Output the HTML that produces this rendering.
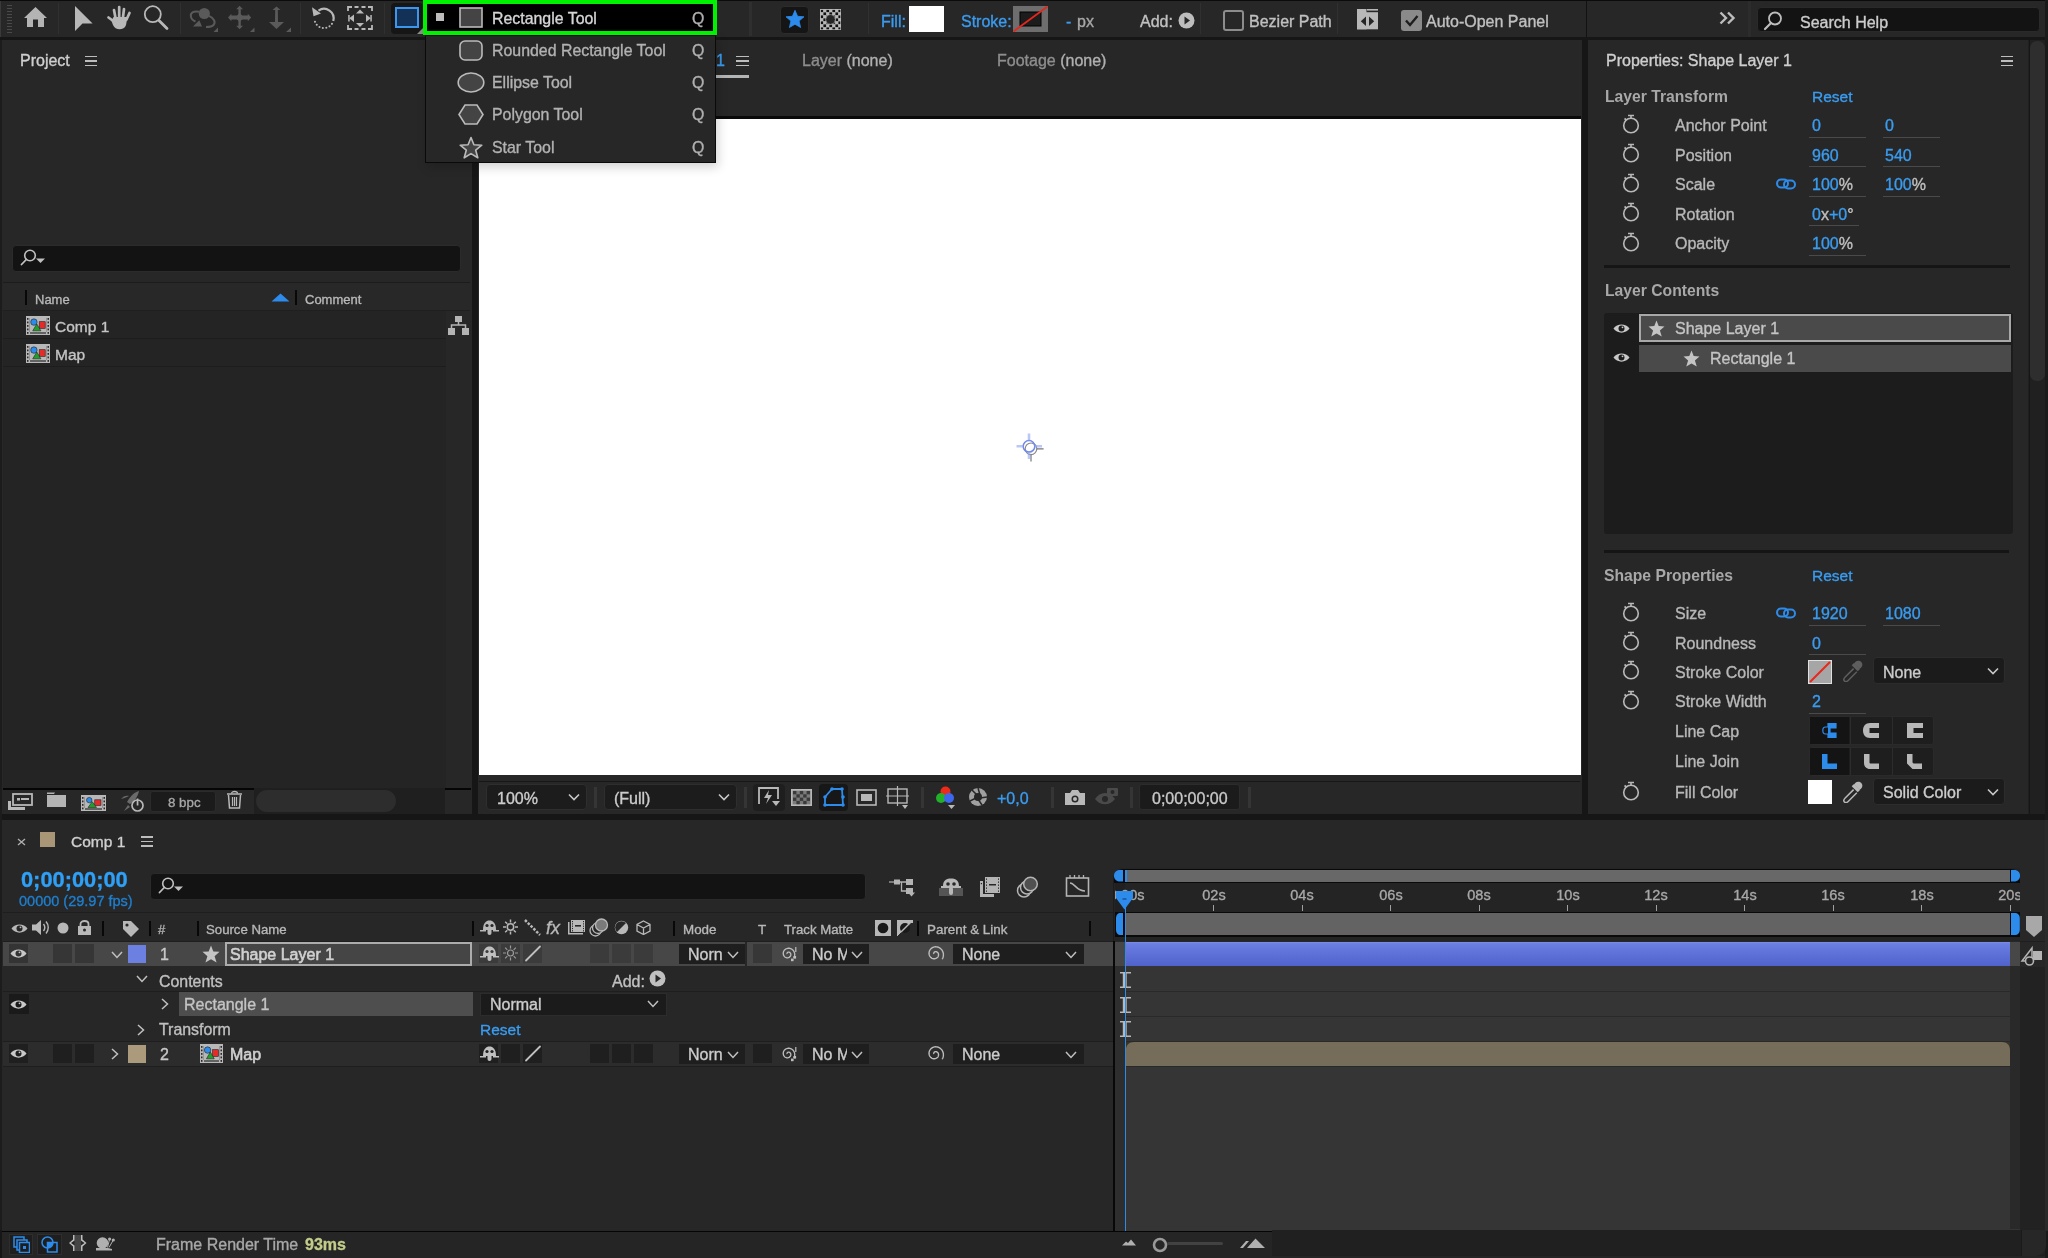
<!DOCTYPE html>
<html><head><meta charset="utf-8"><title>After Effects</title>
<style>
html,body{margin:0;padding:0;}
body{width:2048px;height:1258px;overflow:hidden;position:relative;background:#161616;font-family:"Liberation Sans", sans-serif;}
body>div{position:absolute;}
.t{white-space:nowrap;-webkit-text-stroke:0.35px currentColor;will-change:transform;}
</style></head><body>
<div style="left:0px;top:0px;width:2048px;height:1258px;background:#161616;"></div>
<div style="left:0px;top:0px;width:2048px;height:1px;background:#0b0b0b;"></div>
<div style="left:0px;top:1px;width:2048px;height:36px;background:#272727;"></div>
<div style="left:0px;top:37px;width:2048px;height:3px;background:#161616;"></div>
<div style="left:7px;top:5px;width:5px;height:1px;background:#4a4a4a;"></div>
<div style="left:7px;top:8px;width:5px;height:1px;background:#4a4a4a;"></div>
<div style="left:7px;top:11px;width:5px;height:1px;background:#4a4a4a;"></div>
<div style="left:7px;top:14px;width:5px;height:1px;background:#4a4a4a;"></div>
<div style="left:7px;top:17px;width:5px;height:1px;background:#4a4a4a;"></div>
<div style="left:7px;top:20px;width:5px;height:1px;background:#4a4a4a;"></div>
<div style="left:7px;top:23px;width:5px;height:1px;background:#4a4a4a;"></div>
<div style="left:7px;top:26px;width:5px;height:1px;background:#4a4a4a;"></div>
<div style="left:7px;top:29px;width:5px;height:1px;background:#4a4a4a;"></div>
<div style="left:7px;top:32px;width:5px;height:1px;background:#4a4a4a;"></div>
<div style="left:0px;top:1px;width:1px;height:36px;background:#3a3a3a;"></div>
<svg style="position:absolute;left:23px;top:6px;" width="25" height="23" viewBox="0 0 25 23"><path d="M12.5 1 L24 12 L21 12 L21 21 L15 21 L15 13.5 L10 13.5 L10 21 L4 21 L4 12 L1 12 Z" fill="#b4b4b4"/></svg>
<div style="left:58px;top:3px;width:1px;height:31px;background:#303030;"></div>
<svg style="position:absolute;left:74px;top:5px;" width="20" height="27" viewBox="0 0 20 27"><path d="M1 1 L18.6 18.5 L8.5 18.5 L1 26 Z" fill="#b8b8b8"/></svg>
<svg style="position:absolute;left:104px;top:4px;" width="28" height="28" viewBox="0 0 28 28"><path d="M10 6 L11.5 14 M15.2 3 L15.2 13 M20 5 L19 13 M25.5 9 L22.5 15.5 M4.5 13.5 L10 17.5" stroke="#b8b8b8" stroke-width="2.7" stroke-linecap="round"/><path d="M9.5 13 L23.5 13 L22 21 C21 24 18.5 25.3 15.5 25.3 C12.5 25.3 10.5 24 9 21 L7.5 17 Z" fill="#b8b8b8"/></svg>
<svg style="position:absolute;left:143px;top:5px;" width="27" height="27" viewBox="0 0 27 27"><circle cx="9.8" cy="9.2" r="8" fill="none" stroke="#b8b8b8" stroke-width="1.8"/><path d="M16 15.5 L24 23.5" stroke="#b8b8b8" stroke-width="2.8" stroke-linecap="round"/></svg>
<div style="left:180px;top:3px;width:1px;height:31px;background:#303030;"></div>
<svg style="position:absolute;left:180px;top:0px;" width="45" height="36" viewBox="0 0 45 36"><circle cx="24.3" cy="13.5" r="5.6" fill="#5a5a5a"/><path d="M19 11.8 C14 10.5 10.5 12.5 10.8 16 C11 18.5 13 20.5 15.5 21.5" fill="none" stroke="#5a5a5a" stroke-width="2"/><path d="M13 26.5 L19.3 20.2 L22 26.5 Z" fill="#5a5a5a"/><path d="M29 15.8 C34 18 36 22.5 33.5 25 C32 26.8 29 27 26 27" fill="none" stroke="#5a5a5a" stroke-width="2"/><path d="M33.5 32 L38 32 L38 27.5 Z" fill="#5a5a5a"/></svg>
<svg style="position:absolute;left:224px;top:0px;" width="34" height="36" viewBox="0 0 34 36"><path d="M15.6 5.8 L19 9.2 L16.8 9.2 L16.8 15.5 L23.8 15.5 L23.8 13.8 L27.2 17.5 L23.8 21.2 L23.8 19.5 L16.8 19.5 L16.8 25.8 L19 25.8 L15.6 29.2 L12.2 25.8 L14.4 25.8 L14.4 19.5 L7.4 19.5 L7.4 21.2 L4 17.5 L7.4 13.8 L7.4 15.5 L14.4 15.5 L14.4 9.2 L12.2 9.2 Z" fill="#5a5a5a"/><path d="M15.6 13 L20 17.5 L15.6 22 L11.2 17.5 Z" fill="#5a5a5a"/><path d="M26 32 L30.5 32 L30.5 27.5 Z" fill="#5a5a5a"/></svg>
<svg style="position:absolute;left:262px;top:0px;" width="34" height="36" viewBox="0 0 34 36"><path d="M14.5 6.5 L18.5 10 L15.8 10 L16 22 L22 22 L14.5 29 L7 22 L13 22 L13.2 10 L10.5 10 Z" fill="#5a5a5a"/><path d="M24 32 L29 32 L29 27.5 Z" fill="#5a5a5a"/></svg>
<div style="left:300px;top:3px;width:1px;height:31px;background:#303030;"></div>
<svg style="position:absolute;left:308px;top:3px;" width="32" height="30" viewBox="0 0 32 30"><path d="M10.49 7.64 A9.6 9.6 0 0 1 25.27 17.98" fill="none" stroke="#b8b8b8" stroke-width="2.2"/><path d="M4 4.2 L13 10.5 L5.5 13.2 Z" fill="#b8b8b8"/><circle cx="6.98" cy="18.78" r="1.05" fill="#b8b8b8"/><circle cx="8.75" cy="21.80" r="1.05" fill="#b8b8b8"/><circle cx="11.49" cy="23.98" r="1.05" fill="#b8b8b8"/><circle cx="14.83" cy="25.03" r="1.05" fill="#b8b8b8"/><circle cx="18.32" cy="24.81" r="1.05" fill="#b8b8b8"/><circle cx="21.51" cy="23.36" r="1.05" fill="#b8b8b8"/><circle cx="23.96" cy="20.87" r="1.05" fill="#b8b8b8"/></svg>
<svg style="position:absolute;left:347px;top:6px;" width="26" height="24" viewBox="0 0 26 24"><path d="M1 5 L1 1 L5 1 M21 1 L25 1 L25 5 M25 19 L25 23 L21 23 M5 23 L1 23 L1 19" fill="none" stroke="#b8b8b8" stroke-width="1.8"/><path d="M7.5 1 L11.5 1 M14.5 1 L18.5 1 M7.5 23 L11.5 23 M14.5 23 L18.5 23" stroke="#b8b8b8" stroke-width="1.8"/><path d="M13 3.5 L17 7.5 L9 7.5 Z M13 21 L17 17 L9 17 Z" fill="#b8b8b8"/><path d="M7 8.5 L2.2 12.2 L7 16 Z M19 8.5 L23.8 12.2 L19 16 Z" fill="#b8b8b8"/><rect x="1.2" y="9" width="1.5" height="6.5" fill="#b8b8b8"/><rect x="23.3" y="9" width="1.5" height="6.5" fill="#b8b8b8"/></svg>
<div style="left:384px;top:3px;width:1px;height:31px;background:#303030;"></div>
<div style="left:391px;top:3px;width:32px;height:31px;background:#161616;border-radius:4px;"></div>
<div style="left:395px;top:7px;width:24px;height:21px;background:#133057;border:2px solid #3d96ee;box-sizing:border-box;"></div>
<svg style="position:absolute;left:417px;top:28px;" width="6" height="6" viewBox="0 0 6 6"><path d="M6 0 L6 6 L0 6 Z" fill="#8a8a8a"/></svg>
<div style="left:749px;top:2px;width:2.5px;height:34px;background:#2f2f2f;"></div>
<div style="left:780px;top:5.5px;width:29px;height:28.5px;background:#151515;border:1px solid #2c2c2c;border-radius:4px;box-sizing:border-box;"></div>
<svg style="position:absolute;left:785px;top:8.5px;" width="20" height="19" viewBox="0 0 20 19"><path d="M10 1.3 L12.6 7.3 L19 7.8 L14.1 12 L15.6 18.5 L10 15.2 L4.4 18.5 L5.9 12 L1 7.8 L7.4 7.3 Z" fill="#2d8ceb" stroke="#2d8ceb" stroke-width="0.8" stroke-linejoin="round"/></svg>
<svg style="position:absolute;left:820px;top:8.5px;" width="21" height="21" viewBox="0 0 21 21"><rect x="0" y="0" width="21" height="21" fill="#b8b8b8"/><g clip-path="inset(0)"><rect x="0.40" y="0.40" width="2.70" height="2.70" fill="#111"/><rect x="0.40" y="6.40" width="2.70" height="2.70" fill="#111"/><rect x="0.40" y="12.40" width="2.70" height="2.70" fill="#111"/><rect x="0.40" y="18.40" width="2.70" height="2.70" fill="#111"/><rect x="3.40" y="3.40" width="2.70" height="2.70" fill="#111"/><rect x="3.40" y="9.40" width="2.70" height="2.70" fill="#111"/><rect x="3.40" y="15.40" width="2.70" height="2.70" fill="#111"/><rect x="6.40" y="0.40" width="2.70" height="2.70" fill="#111"/><rect x="6.40" y="6.40" width="2.70" height="2.70" fill="#111"/><rect x="6.40" y="12.40" width="2.70" height="2.70" fill="#111"/><rect x="6.40" y="18.40" width="2.70" height="2.70" fill="#111"/><rect x="9.40" y="3.40" width="2.70" height="2.70" fill="#111"/><rect x="9.40" y="9.40" width="2.70" height="2.70" fill="#111"/><rect x="9.40" y="15.40" width="2.70" height="2.70" fill="#111"/><rect x="12.40" y="0.40" width="2.70" height="2.70" fill="#111"/><rect x="12.40" y="6.40" width="2.70" height="2.70" fill="#111"/><rect x="12.40" y="12.40" width="2.70" height="2.70" fill="#111"/><rect x="12.40" y="18.40" width="2.70" height="2.70" fill="#111"/><rect x="15.40" y="3.40" width="2.70" height="2.70" fill="#111"/><rect x="15.40" y="9.40" width="2.70" height="2.70" fill="#111"/><rect x="15.40" y="15.40" width="2.70" height="2.70" fill="#111"/><rect x="18.40" y="0.40" width="2.70" height="2.70" fill="#111"/><rect x="18.40" y="6.40" width="2.70" height="2.70" fill="#111"/><rect x="18.40" y="12.40" width="2.70" height="2.70" fill="#111"/><rect x="18.40" y="18.40" width="2.70" height="2.70" fill="#111"/></g><circle cx="10.5" cy="10.5" r="5.6" fill="#b8b8b8" opacity="0.55"/><circle cx="10.5" cy="10.5" r="4.4" fill="#262626"/><rect x="0" y="0" width="21" height="21" fill="none" stroke="#b8b8b8" stroke-width="1.4"/></svg>
<div style="left:868px;top:3px;width:1px;height:31px;background:#303030;"></div>
<div class="t" style="left:881px;top:11.56px;font-size:16px;line-height:20px;color:#3a9cf0;font-weight:400;">Fill:</div>
<div style="left:909px;top:6px;width:35px;height:26px;background:#ffffff;"></div>
<div class="t" style="left:961px;top:11.56px;font-size:16px;line-height:20px;color:#3a9cf0;font-weight:400;">Stroke:</div>
<svg style="position:absolute;left:1013px;top:6px;" width="35" height="26" viewBox="0 0 35 26"><rect x="0" y="0" width="35" height="26" fill="#6e6e6e"/><rect x="7" y="6" width="21" height="14" fill="#1c1c1c" stroke="#000" stroke-width="1"/><path d="M0.5 25.5 L34.5 0.5" stroke="#e8261c" stroke-width="1.8"/></svg>
<div class="t" style="left:1066px;top:11.56px;font-size:16px;line-height:20px;color:#3a9cf0;font-weight:400;">-</div>
<div class="t" style="left:1077px;top:11.56px;font-size:16px;line-height:20px;color:#a8a8a8;font-weight:400;">px</div>
<div class="t" style="left:1140px;top:11.56px;font-size:16px;line-height:20px;color:#c0c0c0;font-weight:400;">Add:</div>
<svg style="position:absolute;left:1178px;top:12px;" width="17" height="17" viewBox="0 0 17 17"><circle cx="8.5" cy="8.5" r="8" fill="#bdbdbd"/><path d="M6.5 4.5 L12 8.5 L6.5 12.5 Z" fill="#272727"/></svg>
<div style="left:1200px;top:3px;width:1px;height:31px;background:#303030;"></div>
<div style="left:1223px;top:10px;width:21px;height:21px;background:transparent;border:2px solid #8c8c8c;border-radius:3px;box-sizing:border-box;"></div>
<div class="t" style="left:1249px;top:11.56px;font-size:16px;line-height:20px;color:#c0c0c0;font-weight:400;">Bezier Path</div>
<div style="left:1337px;top:3px;width:1px;height:31px;background:#303030;"></div>
<svg style="position:absolute;left:1356px;top:8px;" width="23" height="22" viewBox="0 0 23 22"><rect x="1" y="1" width="9.5" height="20.3" fill="#b8b8b8"/><rect x="1" y="4.2" width="21" height="17.1" fill="#b8b8b8"/><rect x="11" y="1" width="11" height="1.6" fill="#b8b8b8"/><path d="M4.8 13.3 L10 8.6 L10 18 Z M18.2 13.3 L13 8.6 L13 18 Z" fill="#262626"/></svg>
<div style="left:1401px;top:10px;width:21px;height:21px;background:#8a8a8a;border-radius:3px;"></div>
<svg style="position:absolute;left:1401px;top:10px;" width="21" height="21" viewBox="0 0 21 21"><path d="M5 10.5 L9 15 L16.5 6" fill="none" stroke="#1e1e1e" stroke-width="2.4"/></svg>
<div class="t" style="left:1426px;top:11.56px;font-size:16px;line-height:20px;color:#c0c0c0;font-weight:400;">Auto-Open Panel</div>
<div style="left:1586px;top:1px;width:1px;height:36px;background:#121212;"></div>
<svg style="position:absolute;left:1719px;top:11px;" width="17" height="14" viewBox="0 0 17 14"><path d="M1.5 1.5 L7 7 L1.5 12.5 M9 1.5 L14.5 7 L9 12.5" fill="none" stroke="#bdbdbd" stroke-width="2.4"/></svg>
<div style="left:1748px;top:1px;width:3px;height:36px;background:#2c2c2c;"></div>
<div style="left:1757px;top:7px;width:283px;height:25px;background:#131313;border:1px solid #2a2a2a;border-radius:4px;box-sizing:border-box;"></div>
<svg style="position:absolute;left:1763px;top:11px;" width="20" height="20" viewBox="0 0 20 20"><circle cx="12" cy="7.5" r="6" fill="none" stroke="#bdbdbd" stroke-width="1.8"/><path d="M8 12 L2 18" stroke="#bdbdbd" stroke-width="2.2" stroke-linecap="round"/></svg>
<div class="t" style="left:1800px;top:12.66px;font-size:16px;line-height:20px;color:#cccccc;font-weight:400;">Search Help</div>
<div style="left:2045px;top:0px;width:3px;height:1258px;background:#1a1a1a;"></div>
<div style="left:2px;top:40px;width:470px;height:774px;background:#272727;"></div>
<div style="left:0px;top:40px;width:2px;height:1190px;background:#1c1c1c;"></div>
<div class="t" style="left:20px;top:51.26px;font-size:16px;line-height:20px;color:#cfcfcf;font-weight:400;">Project</div>
<div style="left:85px;top:55.75px;width:12px;height:1.5px;background:#bdbdbd;"></div>
<div style="left:85px;top:60.05px;width:12px;height:1.5px;background:#bdbdbd;"></div>
<div style="left:85px;top:64.55px;width:12px;height:1.5px;background:#bdbdbd;"></div>
<div style="left:12px;top:245px;width:449px;height:27px;background:#131313;border:1px solid #2b2b2b;border-radius:4px;box-sizing:border-box;"></div>
<svg style="position:absolute;left:20px;top:249px;" width="27" height="18" viewBox="0 0 27 18"><circle cx="10" cy="6.5" r="5.3" fill="none" stroke="#c0c0c0" stroke-width="1.6"/><path d="M6.3 10.5 L1.5 15.5" stroke="#c0c0c0" stroke-width="1.8" stroke-linecap="round"/><path d="M16 9.5 L25 9.5 L20.5 14 Z" fill="#c0c0c0"/></svg>
<div style="left:3px;top:282px;width:467px;height:1px;background:#1c1c1c;"></div>
<div style="left:3px;top:283px;width:467px;height:28px;background:#282828;"></div>
<div style="left:3px;top:310px;width:467px;height:1px;background:#1f1f1f;"></div>
<div style="left:25px;top:290px;width:2px;height:15px;background:#080808;"></div>
<div class="t" style="left:34.6px;top:290.50px;font-size:13px;line-height:17px;color:#b8b8b8;font-weight:400;">Name</div>
<svg style="position:absolute;left:271px;top:293px;" width="20" height="9" viewBox="0 0 20 9"><path d="M0.5 8.5 L9.5 0.5 L18.5 8.5 Z" fill="#2d8ceb"/></svg>
<div style="left:295px;top:290px;width:2px;height:15px;background:#080808;"></div>
<div class="t" style="left:304.5px;top:290.50px;font-size:13px;line-height:17px;color:#b8b8b8;font-weight:400;">Comment</div>
<div style="left:3px;top:311px;width:443px;height:477px;background:#242424;"></div>
<div style="left:3px;top:338px;width:443px;height:1px;background:#1d1d1d;"></div>
<div style="left:3px;top:366px;width:443px;height:1px;background:#1d1d1d;"></div>
<svg style="position:absolute;left:26px;top:316px;" width="24" height="19" viewBox="0 0 24 19"><rect x="0" y="0" width="24" height="19" fill="#b8b8b8"/><rect x="3.5" y="2" width="17" height="14" fill="#2a2a2a"/><rect x="1" y="2.0" width="1.5" height="1.8" fill="#2a2a2a"/><rect x="21.5" y="2.0" width="1.5" height="1.8" fill="#2a2a2a"/><rect x="1" y="5.5" width="1.5" height="1.8" fill="#2a2a2a"/><rect x="21.5" y="5.5" width="1.5" height="1.8" fill="#2a2a2a"/><rect x="1" y="9.0" width="1.5" height="1.8" fill="#2a2a2a"/><rect x="21.5" y="9.0" width="1.5" height="1.8" fill="#2a2a2a"/><rect x="1" y="12.5" width="1.5" height="1.8" fill="#2a2a2a"/><rect x="21.5" y="12.5" width="1.5" height="1.8" fill="#2a2a2a"/><rect x="1" y="16.0" width="1.5" height="1.8" fill="#2a2a2a"/><rect x="21.5" y="16.0" width="1.5" height="1.8" fill="#2a2a2a"/><rect x="3.5" y="2" width="17" height="14" fill="#b8b8b8"/><rect x="13.200000000000001" y="5.7" width="6.0" height="6.6499999999999995" fill="#e52a2a" stroke="#222" stroke-width="0.6"/><circle cx="7.92" cy="6.08" r="3.2300000000000004" fill="#2d8ceb" stroke="#222" stroke-width="0.6"/><path d="M6.720000000000001 14.82 L10.8 7.9799999999999995 L14.879999999999999 14.82 Z" fill="#1fa02a" stroke="#222" stroke-width="0.6"/><rect x="4" y="16.4" width="16" height="1.2" fill="#2a2a2a"/></svg>
<div class="t" style="left:55px;top:317.33px;font-size:15.5px;line-height:20px;color:#c4c4c4;font-weight:400;">Comp 1</div>
<svg style="position:absolute;left:26px;top:344px;" width="24" height="19" viewBox="0 0 24 19"><rect x="0" y="0" width="24" height="19" fill="#b8b8b8"/><rect x="3.5" y="2" width="17" height="14" fill="#2a2a2a"/><rect x="1" y="2.0" width="1.5" height="1.8" fill="#2a2a2a"/><rect x="21.5" y="2.0" width="1.5" height="1.8" fill="#2a2a2a"/><rect x="1" y="5.5" width="1.5" height="1.8" fill="#2a2a2a"/><rect x="21.5" y="5.5" width="1.5" height="1.8" fill="#2a2a2a"/><rect x="1" y="9.0" width="1.5" height="1.8" fill="#2a2a2a"/><rect x="21.5" y="9.0" width="1.5" height="1.8" fill="#2a2a2a"/><rect x="1" y="12.5" width="1.5" height="1.8" fill="#2a2a2a"/><rect x="21.5" y="12.5" width="1.5" height="1.8" fill="#2a2a2a"/><rect x="1" y="16.0" width="1.5" height="1.8" fill="#2a2a2a"/><rect x="21.5" y="16.0" width="1.5" height="1.8" fill="#2a2a2a"/><rect x="3.5" y="2" width="17" height="14" fill="#b8b8b8"/><rect x="13.200000000000001" y="5.7" width="6.0" height="6.6499999999999995" fill="#e52a2a" stroke="#222" stroke-width="0.6"/><circle cx="7.92" cy="6.08" r="3.2300000000000004" fill="#2d8ceb" stroke="#222" stroke-width="0.6"/><path d="M6.720000000000001 14.82 L10.8 7.9799999999999995 L14.879999999999999 14.82 Z" fill="#1fa02a" stroke="#222" stroke-width="0.6"/><rect x="4" y="16.4" width="16" height="1.2" fill="#2a2a2a"/></svg>
<div class="t" style="left:55px;top:344.73px;font-size:15.5px;line-height:20px;color:#c4c4c4;font-weight:400;">Map</div>
<svg style="position:absolute;left:448px;top:316px;" width="21" height="19" viewBox="0 0 21 19"><rect x="7" y="0" width="7" height="6" fill="#b4b4b4"/><rect x="0" y="12" width="7" height="7" fill="#b4b4b4"/><rect x="14" y="12" width="7" height="7" fill="#b4b4b4"/><path d="M10.5 6 L10.5 9 M3.5 12 L3.5 9 L17.5 9 L17.5 12" stroke="#b4b4b4" stroke-width="1.5" fill="none"/></svg>
<div style="left:3px;top:788px;width:251px;height:1.5px;background:#050505;"></div>
<div style="left:445px;top:788px;width:26px;height:1.5px;background:#050505;"></div>
<div style="left:254px;top:788px;width:191px;height:26px;background:#1f1f1f;"></div>
<div style="left:256px;top:790px;width:140px;height:22px;background:#2d2d2d;border-radius:11px;"></div>
<svg style="position:absolute;left:7px;top:793px;" width="26" height="18" viewBox="0 0 26 18"><rect x="6" y="1" width="19" height="11" fill="none" stroke="#b8b8b8" stroke-width="1.8"/><rect x="10" y="5" width="3" height="2.5" fill="#b8b8b8"/><rect x="14" y="5" width="8" height="2" fill="#b8b8b8"/><path d="M1 17 L1 8 L4 8 L4 14 L18 14 L18 17 Z" fill="#b8b8b8"/></svg>
<svg style="position:absolute;left:47px;top:792px;" width="20" height="15" viewBox="0 0 20 15"><path d="M0 2 L7 2 L8 0.5 L0 0.5 Z" fill="#b4b4b4"/><rect x="0" y="3" width="19" height="12" fill="#b4b4b4"/></svg>
<svg style="position:absolute;left:81px;top:795px;" width="25" height="16" viewBox="0 0 25 16"><rect x="0" y="0" width="25" height="16" fill="#b8b8b8"/><rect x="3.5" y="2" width="18" height="11" fill="#2a2a2a"/><rect x="1" y="2.0" width="1.5" height="1.8" fill="#2a2a2a"/><rect x="22.5" y="2.0" width="1.5" height="1.8" fill="#2a2a2a"/><rect x="1" y="5.5" width="1.5" height="1.8" fill="#2a2a2a"/><rect x="22.5" y="5.5" width="1.5" height="1.8" fill="#2a2a2a"/><rect x="1" y="9.0" width="1.5" height="1.8" fill="#2a2a2a"/><rect x="22.5" y="9.0" width="1.5" height="1.8" fill="#2a2a2a"/><rect x="1" y="12.5" width="1.5" height="1.8" fill="#2a2a2a"/><rect x="22.5" y="12.5" width="1.5" height="1.8" fill="#2a2a2a"/><rect x="1" y="16.0" width="1.5" height="1.8" fill="#2a2a2a"/><rect x="22.5" y="16.0" width="1.5" height="1.8" fill="#2a2a2a"/><rect x="3.5" y="2" width="18" height="11" fill="#b8b8b8"/><rect x="13.750000000000002" y="4.8" width="6.25" height="5.6" fill="#e52a2a" stroke="#222" stroke-width="0.6"/><circle cx="8.25" cy="5.12" r="2.72" fill="#2d8ceb" stroke="#222" stroke-width="0.6"/><path d="M7.000000000000001 12.48 L11.25 6.72 L15.5 12.48 Z" fill="#1fa02a" stroke="#222" stroke-width="0.6"/><rect x="4" y="13.4" width="17" height="1.2" fill="#2a2a2a"/></svg>
<svg style="position:absolute;left:119px;top:790px;" width="26" height="23" viewBox="0 0 26 23"><path d="M2 9 C4 6 8 5 10 6 C8 7 6 8 2 9 Z" fill="#6a6a6a"/><path d="M8 12 C12 5 16 2 20 1 C19 6 16 11 11 14 Z" fill="#6a6a6a"/><path d="M9 15 L5 21 L11 17 Z" fill="#6a6a6a"/><circle cx="18.5" cy="15.5" r="5.5" fill="none" stroke="#b8b8b8" stroke-width="1.7"/><rect x="17.7" y="8.5" width="1.7" height="7" fill="#b8b8b8"/></svg>
<div style="left:150px;top:791px;width:66px;height:21px;background:#1b1b1b;border:1px solid #2b2b2b;border-radius:3px;box-sizing:border-box;"></div>
<div class="t" style="left:167.5px;top:794.49px;font-size:13.3px;line-height:17px;color:#a8a8a8;font-weight:400;">8 bpc</div>
<svg style="position:absolute;left:226px;top:790px;" width="17" height="19" viewBox="0 0 17 19"><path d="M1 4 L16 4" stroke="#b8b8b8" stroke-width="1.5"/><path d="M5.5 3.5 C5.5 0.8 11.5 0.8 11.5 3.5" stroke="#b8b8b8" stroke-width="1.3" fill="none"/><path d="M2.5 5 L3.5 18 L13.5 18 L14.5 5" stroke="#b8b8b8" stroke-width="1.5" fill="none"/><path d="M6.5 7 L6.5 16 M8.5 7 L8.5 16 M10.5 7 L10.5 16" stroke="#b8b8b8" stroke-width="1.2"/></svg>
<div style="left:478px;top:40px;width:1104px;height:774px;background:#272727;"></div>
<div class="t" style="left:716px;top:50.86px;font-size:16px;line-height:20px;color:#3a9cf0;font-weight:400;">1</div>
<div style="left:736px;top:55.75px;width:13px;height:1.5px;background:#bdbdbd;"></div>
<div style="left:736px;top:60.45px;width:13px;height:1.5px;background:#bdbdbd;"></div>
<div style="left:736px;top:64.85px;width:13px;height:1.5px;background:#bdbdbd;"></div>
<div style="left:716px;top:75px;width:33px;height:2.5px;background:#b4b4b4;"></div>
<div class="t" style="left:801.5px;top:50.86px;font-size:16px;line-height:20px;color:#b0b0b0;font-weight:400;"><span style="color:#8e8e8e">Layer</span> (none)</div>
<div class="t" style="left:996.6px;top:50.86px;font-size:16px;line-height:20px;color:#b0b0b0;font-weight:400;"><span style="color:#8e8e8e">Footage</span> (none)</div>
<div style="left:479px;top:116px;width:1102px;height:3px;background:#0a0a0a;"></div>
<div style="left:479px;top:119px;width:1102px;height:656px;background:#ffffff;"></div>
<div style="left:479px;top:780.5px;width:1101px;height:1.5px;background:#171717;"></div>
<svg style="position:absolute;left:1011px;top:428px;" width="36" height="36" viewBox="0 0 36 36"><circle cx="20" cy="20.8" r="5.8" fill="none" stroke="#8a8a8a" stroke-width="1.2"/><path d="M20 26.6 L20 33.5 M25.8 20.8 L32.6 20.8" stroke="#777" stroke-width="1.2"/><circle cx="18" cy="18.3" r="5.8" fill="none" stroke="#7088ea" stroke-width="1.5"/><path d="M18 5.5 L18 12.5 M18 24 L18 31 M5.5 18.3 L12.2 18.3 M23.8 18.3 L31 18.3" stroke="#8fa2f0" stroke-width="2.6" opacity="0.6"/></svg>
<div style="left:486px;top:784px;width:101px;height:26px;background:#1c1c1c;border:1px solid #2e2e2e;border-radius:4px;box-sizing:border-box;"></div>
<div class="t" style="left:497px;top:789.16px;font-size:16px;line-height:20px;color:#cccccc;font-weight:400;">100%</div>
<svg style="position:absolute;left:568px;top:793.0px;" width="12" height="8" viewBox="0 0 12 8"><path d="M1 1.5 L6 6.5 L11 1.5" fill="none" stroke="#c8c8c8" stroke-width="1.6"/></svg>
<div style="left:594px;top:787px;width:2.5px;height:21px;background:#353535;"></div>
<div style="left:604px;top:784px;width:133px;height:26px;background:#1c1c1c;border:1px solid #2e2e2e;border-radius:4px;box-sizing:border-box;"></div>
<div class="t" style="left:613.7px;top:789.16px;font-size:16px;line-height:20px;color:#cccccc;font-weight:400;">(Full)</div>
<svg style="position:absolute;left:718px;top:793.0px;" width="12" height="8" viewBox="0 0 12 8"><path d="M1 1.5 L6 6.5 L11 1.5" fill="none" stroke="#c8c8c8" stroke-width="1.6"/></svg>
<div style="left:744px;top:787px;width:2.5px;height:21px;background:#353535;"></div>
<div style="left:753px;top:784px;width:32px;height:27px;background:#1e1e1e;border-radius:4px;"></div>
<svg style="position:absolute;left:758px;top:787px;" width="23" height="20" viewBox="0 0 23 20"><path d="M1 17 L1 1 L20 1 L20 12" fill="none" stroke="#b8b8b8" stroke-width="1.8"/><path d="M11 3 L6 11 L10 11 L8 17 L14 8 L10 8 Z" fill="#b8b8b8"/><path d="M14 14 L22 14 L18 19 Z" fill="#b8b8b8"/></svg>
<svg style="position:absolute;left:791px;top:789px;" width="21" height="17" viewBox="0 0 21 17"><rect x="0.8" y="0.8" width="19.4" height="15.4" fill="#7a7a7a" stroke="#b8b8b8" stroke-width="1.6"/><rect x="2.0" y="2.0" width="3.4" height="3.3" fill="#3a3a3a"/><rect x="2.0" y="8.6" width="3.4" height="3.3" fill="#3a3a3a"/><rect x="5.4" y="5.3" width="3.4" height="3.3" fill="#3a3a3a"/><rect x="5.4" y="11.9" width="3.4" height="3.3" fill="#3a3a3a"/><rect x="8.8" y="2.0" width="3.4" height="3.3" fill="#3a3a3a"/><rect x="8.8" y="8.6" width="3.4" height="3.3" fill="#3a3a3a"/><rect x="12.2" y="5.3" width="3.4" height="3.3" fill="#3a3a3a"/><rect x="12.2" y="11.9" width="3.4" height="3.3" fill="#3a3a3a"/><rect x="15.6" y="2.0" width="3.4" height="3.3" fill="#3a3a3a"/><rect x="15.6" y="8.6" width="3.4" height="3.3" fill="#3a3a3a"/></svg>
<div style="left:819px;top:784px;width:29px;height:27px;background:#171717;border-radius:4px;"></div>
<svg style="position:absolute;left:822px;top:787px;" width="23" height="20" viewBox="0 0 23 20"><path d="M10 2 L20 2 L21 18 L3 18 L3 10 Z" fill="none" stroke="#2d8ceb" stroke-width="1.8"/><circle cx="10" cy="2" r="1.8" fill="#2d8ceb"/><circle cx="20" cy="2" r="1.8" fill="#2d8ceb"/><circle cx="21" cy="10" r="1.8" fill="#2d8ceb"/><circle cx="21" cy="18" r="1.8" fill="#2d8ceb"/><circle cx="3" cy="18" r="1.8" fill="#2d8ceb"/><circle cx="3" cy="10" r="1.8" fill="#2d8ceb"/></svg>
<svg style="position:absolute;left:856px;top:789px;" width="21" height="17" viewBox="0 0 21 17"><rect x="1" y="1" width="19" height="15" fill="none" stroke="#b8b8b8" stroke-width="1.6"/><rect x="5" y="5" width="11" height="7" fill="#b8b8b8"/></svg>
<svg style="position:absolute;left:886px;top:786px;" width="24" height="24" viewBox="0 0 24 24"><rect x="2" y="3" width="19" height="14" fill="none" stroke="#b8b8b8" stroke-width="1.4"/><path d="M11.5 0 L11.5 20 M0 10 L23 10" stroke="#b8b8b8" stroke-width="1.2" stroke-dasharray="0"/><path d="M16 19 L22 19 L19 23 Z" fill="#b8b8b8"/></svg>
<div style="left:921px;top:787px;width:2.5px;height:21px;background:#353535;"></div>
<svg style="position:absolute;left:935px;top:786px;" width="22" height="24" viewBox="0 0 22 24"><circle cx="10.5" cy="5.5" r="5" fill="#ee2a1a"/><circle cx="6" cy="12" r="5" fill="#22b02a"/><circle cx="14" cy="12" r="5" fill="#3d68ee"/><path d="M13 19 L20 19 L16.5 23 Z" fill="#b8b8b8"/></svg>
<svg style="position:absolute;left:968px;top:787px;" width="20" height="20" viewBox="0 0 20 20"><circle cx="10" cy="10" r="9" fill="#a0a0a0"/><circle cx="10" cy="10" r="4" fill="#272727"/><path d="M10 1 L12 8 M19 10 L12 11 M14 18 L10 12 M2 14 L8 11 M4 3 L9 8" stroke="#272727" stroke-width="1.5"/></svg>
<div class="t" style="left:997px;top:789.06px;font-size:16px;line-height:20px;color:#3a9cf0;font-weight:400;">+0,0</div>
<div style="left:1051px;top:787px;width:2.5px;height:21px;background:#353535;"></div>
<svg style="position:absolute;left:1064px;top:789px;" width="22" height="17" viewBox="0 0 22 17"><path d="M1 4 L6 4 L8 1 L14 1 L16 4 L21 4 L21 16 L1 16 Z" fill="#b8b8b8"/><circle cx="11" cy="10" r="3.5" fill="#272727"/><circle cx="11" cy="10" r="2" fill="#b8b8b8"/></svg>
<svg style="position:absolute;left:1094px;top:786px;" width="25" height="21" viewBox="0 0 25 21"><path d="M1 13 C6 5 16 5 21 13 C16 20 6 20 1 13 Z" fill="#4a4a4a"/><circle cx="11" cy="13" r="3" fill="#272727"/><rect x="13" y="2" width="11" height="8" fill="#4a4a4a" rx="1"/><circle cx="18.5" cy="6" r="2" fill="#272727"/></svg>
<div style="left:1130px;top:787px;width:2.5px;height:21px;background:#353535;"></div>
<div style="left:1139px;top:784px;width:101px;height:26px;background:#1b1b1b;border:1px solid #2c2c2c;border-radius:3px;box-sizing:border-box;"></div>
<div class="t" style="left:1152px;top:788.96px;font-size:16px;line-height:20px;color:#c8c8c8;font-weight:400;">0;00;00;00</div>
<div style="left:1248px;top:787px;width:2.5px;height:21px;background:#353535;"></div>
<div style="left:1588px;top:40px;width:457px;height:774px;background:#272727;"></div>
<div style="left:2028px;top:40px;width:17px;height:774px;background:#202020;"></div>
<div style="left:2029px;top:40px;width:1px;height:774px;background:#161616;"></div>
<div style="left:2030px;top:41px;width:15px;height:340px;background:#2e2e2e;border-radius:7px;"></div>
<div class="t" style="left:1606px;top:51.06px;font-size:16px;line-height:20px;color:#cfcfcf;font-weight:400;">Properties: Shape Layer 1</div>
<div style="left:2001px;top:55.75px;width:12px;height:1.5px;background:#bdbdbd;"></div>
<div style="left:2001px;top:60.15px;width:12px;height:1.5px;background:#bdbdbd;"></div>
<div style="left:2001px;top:64.65px;width:12px;height:1.5px;background:#bdbdbd;"></div>
<div class="t" style="left:1605px;top:86.56px;font-size:15.7px;line-height:20px;color:#a8a8a8;font-weight:700;-webkit-text-stroke:0;">Layer Transform</div>
<div class="t" style="left:1812px;top:86.63px;font-size:15.5px;line-height:20px;color:#3a9cf0;font-weight:400;">Reset</div>
<svg style="position:absolute;left:1622px;top:113.9px;" width="18" height="20" viewBox="0 0 18 20"><circle cx="9" cy="11.5" r="7.3" fill="none" stroke="#b8b8b8" stroke-width="1.6"/><path d="M6 1.5 L12 1.5 M9 1.5 L9 4" stroke="#b8b8b8" stroke-width="1.6"/><path d="M2.5 4.5 L4.5 6" stroke="#b8b8b8" stroke-width="1.6"/></svg>
<div class="t" style="left:1675px;top:116.16px;font-size:16px;line-height:20px;color:#b8b8b8;font-weight:400;">Anchor Point</div>
<div class="t" style="left:1811.5px;top:116.16px;font-size:16px;line-height:20px;color:#3a9cf0;font-weight:400;">0</div>
<div style="left:1809px;top:136.9px;width:57px;height:1px;background:#4a4a4a;"></div>
<div class="t" style="left:1885px;top:116.16px;font-size:16px;line-height:20px;color:#3a9cf0;font-weight:400;">0</div>
<div style="left:1883px;top:136.9px;width:57px;height:1px;background:#4a4a4a;"></div>
<svg style="position:absolute;left:1622px;top:143.4px;" width="18" height="20" viewBox="0 0 18 20"><circle cx="9" cy="11.5" r="7.3" fill="none" stroke="#b8b8b8" stroke-width="1.6"/><path d="M6 1.5 L12 1.5 M9 1.5 L9 4" stroke="#b8b8b8" stroke-width="1.6"/><path d="M2.5 4.5 L4.5 6" stroke="#b8b8b8" stroke-width="1.6"/></svg>
<div class="t" style="left:1675px;top:145.66px;font-size:16px;line-height:20px;color:#b8b8b8;font-weight:400;">Position</div>
<div class="t" style="left:1811.5px;top:145.66px;font-size:16px;line-height:20px;color:#3a9cf0;font-weight:400;">960</div>
<div style="left:1809px;top:166.4px;width:57px;height:1px;background:#4a4a4a;"></div>
<div class="t" style="left:1885px;top:145.66px;font-size:16px;line-height:20px;color:#3a9cf0;font-weight:400;">540</div>
<div style="left:1883px;top:166.4px;width:57px;height:1px;background:#4a4a4a;"></div>
<svg style="position:absolute;left:1622px;top:172.9px;" width="18" height="20" viewBox="0 0 18 20"><circle cx="9" cy="11.5" r="7.3" fill="none" stroke="#b8b8b8" stroke-width="1.6"/><path d="M6 1.5 L12 1.5 M9 1.5 L9 4" stroke="#b8b8b8" stroke-width="1.6"/><path d="M2.5 4.5 L4.5 6" stroke="#b8b8b8" stroke-width="1.6"/></svg>
<div class="t" style="left:1675px;top:175.16px;font-size:16px;line-height:20px;color:#b8b8b8;font-weight:400;">Scale</div>
<div class="t" style="left:1811.5px;top:175.16px;font-size:16px;line-height:20px;color:#3a9cf0;font-weight:400;">100<span style="color:#c0c0c0">%</span></div>
<div style="left:1809px;top:195.9px;width:57px;height:1px;background:#4a4a4a;"></div>
<div class="t" style="left:1885px;top:175.16px;font-size:16px;line-height:20px;color:#3a9cf0;font-weight:400;">100<span style="color:#c0c0c0">%</span></div>
<div style="left:1883px;top:195.9px;width:57px;height:1px;background:#4a4a4a;"></div>
<svg style="position:absolute;left:1776px;top:177.9px;" width="20" height="12" viewBox="0 0 20 12"><rect x="1" y="1.5" width="11" height="8" rx="4" fill="none" stroke="#2d8ceb" stroke-width="2"/><rect x="8" y="2.5" width="11" height="8" rx="4" fill="none" stroke="#2d8ceb" stroke-width="2"/></svg>
<svg style="position:absolute;left:1622px;top:202.4px;" width="18" height="20" viewBox="0 0 18 20"><circle cx="9" cy="11.5" r="7.3" fill="none" stroke="#b8b8b8" stroke-width="1.6"/><path d="M6 1.5 L12 1.5 M9 1.5 L9 4" stroke="#b8b8b8" stroke-width="1.6"/><path d="M2.5 4.5 L4.5 6" stroke="#b8b8b8" stroke-width="1.6"/></svg>
<div class="t" style="left:1675px;top:204.66px;font-size:16px;line-height:20px;color:#b8b8b8;font-weight:400;">Rotation</div>
<div class="t" style="left:1811.5px;top:204.66px;font-size:16px;line-height:20px;color:#3a9cf0;font-weight:400;">0<span style="color:#c0c0c0">x</span>+0<span style="color:#c0c0c0">°</span></div>
<div style="left:1809px;top:225.4px;width:50px;height:1px;background:#4a4a4a;"></div>
<svg style="position:absolute;left:1622px;top:231.9px;" width="18" height="20" viewBox="0 0 18 20"><circle cx="9" cy="11.5" r="7.3" fill="none" stroke="#b8b8b8" stroke-width="1.6"/><path d="M6 1.5 L12 1.5 M9 1.5 L9 4" stroke="#b8b8b8" stroke-width="1.6"/><path d="M2.5 4.5 L4.5 6" stroke="#b8b8b8" stroke-width="1.6"/></svg>
<div class="t" style="left:1675px;top:234.16px;font-size:16px;line-height:20px;color:#b8b8b8;font-weight:400;">Opacity</div>
<div class="t" style="left:1811.5px;top:234.16px;font-size:16px;line-height:20px;color:#3a9cf0;font-weight:400;">100<span style="color:#c0c0c0">%</span></div>
<div style="left:1809px;top:254.9px;width:57px;height:1px;background:#4a4a4a;"></div>
<div style="left:1604px;top:265px;width:406px;height:2.8px;background:#151515;"></div>
<div class="t" style="left:1605px;top:281.16px;font-size:15.7px;line-height:20px;color:#a8a8a8;font-weight:700;-webkit-text-stroke:0;">Layer Contents</div>
<div style="left:1604px;top:313px;width:409px;height:221px;background:#1c1c1c;border-radius:3px;"></div>
<svg style="position:absolute;left:1613px;top:323px;" width="17" height="11" viewBox="0 0 17 11"><path d="M0.5 5.5 C4 0 13 0 16.5 5.5 C13 11 4 11 0.5 5.5 Z" fill="#c8c8c8"/><circle cx="8.5" cy="5.5" r="3" fill="#1c1c1c"/><circle cx="9.5" cy="4.3" r="0.9" fill="#c8c8c8"/></svg>
<div style="left:1639px;top:314px;width:372px;height:28px;background:#4a4a4a;border:2px solid #a8a8a8;box-sizing:border-box;"></div>
<svg style="position:absolute;left:1648px;top:320px;" width="17" height="17" viewBox="0 0 17 17"><path d="M8.5 0.5 L10.71 6.12 L16.5 6.46 L11.90 10.54 L13.77 16.5 L8.5 13.43 L3.23 16.5 L5.10 10.54 L0.5 6.46 L6.29 6.12 Z" fill="#c4c4c4"/></svg>
<div class="t" style="left:1675px;top:319.46px;font-size:16px;line-height:20px;color:#c4c4c4;font-weight:400;">Shape Layer 1</div>
<svg style="position:absolute;left:1613px;top:352px;" width="17" height="11" viewBox="0 0 17 11"><path d="M0.5 5.5 C4 0 13 0 16.5 5.5 C13 11 4 11 0.5 5.5 Z" fill="#c8c8c8"/><circle cx="8.5" cy="5.5" r="3" fill="#1c1c1c"/><circle cx="9.5" cy="4.3" r="0.9" fill="#c8c8c8"/></svg>
<div style="left:1639px;top:344.5px;width:372px;height:27.5px;background:#4a4a4a;"></div>
<svg style="position:absolute;left:1683px;top:350px;" width="17" height="17" viewBox="0 0 17 17"><path d="M8.5 0.5 L10.71 6.12 L16.5 6.46 L11.90 10.54 L13.77 16.5 L8.5 13.43 L3.23 16.5 L5.10 10.54 L0.5 6.46 L6.29 6.12 Z" fill="#c4c4c4"/></svg>
<div class="t" style="left:1710px;top:349.46px;font-size:16px;line-height:20px;color:#c4c4c4;font-weight:400;">Rectangle 1</div>
<div style="left:1604px;top:550px;width:405px;height:2.8px;background:#151515;"></div>
<div class="t" style="left:1604px;top:566.06px;font-size:15.7px;line-height:20px;color:#a8a8a8;font-weight:700;-webkit-text-stroke:0;">Shape Properties</div>
<div class="t" style="left:1812px;top:566.13px;font-size:15.5px;line-height:20px;color:#3a9cf0;font-weight:400;">Reset</div>
<svg style="position:absolute;left:1622px;top:601.7px;" width="18" height="20" viewBox="0 0 18 20"><circle cx="9" cy="11.5" r="7.3" fill="none" stroke="#b8b8b8" stroke-width="1.6"/><path d="M6 1.5 L12 1.5 M9 1.5 L9 4" stroke="#b8b8b8" stroke-width="1.6"/><path d="M2.5 4.5 L4.5 6" stroke="#b8b8b8" stroke-width="1.6"/></svg>
<div class="t" style="left:1675px;top:603.96px;font-size:16px;line-height:20px;color:#b8b8b8;font-weight:400;">Size</div>
<svg style="position:absolute;left:1776px;top:606.7px;" width="20" height="12" viewBox="0 0 20 12"><rect x="1" y="1.5" width="11" height="8" rx="4" fill="none" stroke="#2d8ceb" stroke-width="2"/><rect x="8" y="2.5" width="11" height="8" rx="4" fill="none" stroke="#2d8ceb" stroke-width="2"/></svg>
<div class="t" style="left:1811.5px;top:603.96px;font-size:16px;line-height:20px;color:#3a9cf0;font-weight:400;">1920</div>
<div style="left:1809px;top:625px;width:57px;height:1px;background:#4a4a4a;"></div>
<div class="t" style="left:1885px;top:603.96px;font-size:16px;line-height:20px;color:#3a9cf0;font-weight:400;">1080</div>
<div style="left:1883px;top:625px;width:57px;height:1px;background:#4a4a4a;"></div>
<svg style="position:absolute;left:1622px;top:631.3px;" width="18" height="20" viewBox="0 0 18 20"><circle cx="9" cy="11.5" r="7.3" fill="none" stroke="#b8b8b8" stroke-width="1.6"/><path d="M6 1.5 L12 1.5 M9 1.5 L9 4" stroke="#b8b8b8" stroke-width="1.6"/><path d="M2.5 4.5 L4.5 6" stroke="#b8b8b8" stroke-width="1.6"/></svg>
<div class="t" style="left:1675px;top:633.56px;font-size:16px;line-height:20px;color:#b8b8b8;font-weight:400;">Roundness</div>
<div class="t" style="left:1811.5px;top:633.56px;font-size:16px;line-height:20px;color:#3a9cf0;font-weight:400;">0</div>
<div style="left:1809px;top:654px;width:57px;height:1px;background:#4a4a4a;"></div>
<svg style="position:absolute;left:1622px;top:660.3px;" width="18" height="20" viewBox="0 0 18 20"><circle cx="9" cy="11.5" r="7.3" fill="none" stroke="#b8b8b8" stroke-width="1.6"/><path d="M6 1.5 L12 1.5 M9 1.5 L9 4" stroke="#b8b8b8" stroke-width="1.6"/><path d="M2.5 4.5 L4.5 6" stroke="#b8b8b8" stroke-width="1.6"/></svg>
<div class="t" style="left:1675px;top:662.56px;font-size:16px;line-height:20px;color:#b8b8b8;font-weight:400;">Stroke Color</div>
<svg style="position:absolute;left:1808px;top:660px;" width="24" height="24" viewBox="0 0 24 24"><rect x="0.5" y="0.5" width="23" height="23" fill="#a6a6a6" stroke="#e0e0e0" stroke-width="1"/><path d="M2 22 L22 2" stroke="#e8261c" stroke-width="2"/></svg>
<svg style="position:absolute;left:1841px;top:660px;" width="22" height="22" viewBox="0 0 22 22"><path d="M14.5 1.8 C16 0.3 19 0.6 20.3 2 C21.7 3.4 21.8 6.2 20.2 7.6 L18.6 9 L13 3.4 Z" fill="#5e5e5e"/><rect x="10.6" y="5.6" width="8.5" height="3.2" transform="rotate(45 14.85 7.2)" fill="#5e5e5e"/><path d="M12.6 8.6 L4.2 17 C2.8 18.4 2.4 20 3.4 21 C4.4 22 6 21.6 7.4 20.2 L15.8 11.8" fill="none" stroke="#5e5e5e" stroke-width="1.5"/></svg>
<div style="left:1873px;top:657px;width:132px;height:27px;background:#1b1b1b;border:1px solid #2c2c2c;border-radius:4px;box-sizing:border-box;"></div>
<div class="t" style="left:1883px;top:662.56px;font-size:16px;line-height:20px;color:#cccccc;font-weight:400;">None</div>
<svg style="position:absolute;left:1987px;top:666.5px;" width="12" height="8" viewBox="0 0 12 8"><path d="M1 1.5 L6 6.5 L11 1.5" fill="none" stroke="#c8c8c8" stroke-width="1.6"/></svg>
<svg style="position:absolute;left:1622px;top:689.7px;" width="18" height="20" viewBox="0 0 18 20"><circle cx="9" cy="11.5" r="7.3" fill="none" stroke="#b8b8b8" stroke-width="1.6"/><path d="M6 1.5 L12 1.5 M9 1.5 L9 4" stroke="#b8b8b8" stroke-width="1.6"/><path d="M2.5 4.5 L4.5 6" stroke="#b8b8b8" stroke-width="1.6"/></svg>
<div class="t" style="left:1675px;top:691.96px;font-size:16px;line-height:20px;color:#b8b8b8;font-weight:400;">Stroke Width</div>
<div class="t" style="left:1811.5px;top:691.96px;font-size:16px;line-height:20px;color:#3a9cf0;font-weight:400;">2</div>
<div style="left:1809px;top:713px;width:57px;height:1px;background:#4a4a4a;"></div>
<div class="t" style="left:1675px;top:721.96px;font-size:16px;line-height:20px;color:#b8b8b8;font-weight:400;">Line Cap</div>
<div style="left:1809px;top:716.2px;width:125px;height:28.5px;background:#1e1e1e;border:1px solid #2a2a2a;border-radius:3px;box-sizing:border-box;"></div>
<div style="left:1810px;top:717.2px;width:39px;height:26.5px;background:#141414;"></div>
<div style="left:1850px;top:717.2px;width:1px;height:26.5px;background:#2c2c2c;"></div>
<div style="left:1892px;top:717.2px;width:1px;height:26.5px;background:#2c2c2c;"></div>
<svg style="position:absolute;left:1822px;top:723px;" width="15" height="15" viewBox="0 0 15 15"><path d="M6 0.5 L14 0.5 L14 5 L8 5 L8 10 L14 10 L14 14.5 L6 14.5 L6 11 L3.5 11 C1.5 11 0.8 9.5 0.8 7.5 C0.8 5.5 1.5 4 3.5 4 L6 4 Z" fill="none" stroke="#2d8ceb" stroke-width="1.2"/><path d="M6 0.5 L14 0.5 L14 5 L8 5 L8 10 L14 10 L14 14.5 L6 14.5 Z" fill="#2d8ceb"/></svg>
<svg style="position:absolute;left:1863px;top:723px;" width="16" height="15" viewBox="0 0 16 15"><path d="M16 0 L7 0 C2.5 0 0 3 0 7.5 C0 12 2.5 15 7 15 L16 15 L16 10 L6.5 10 L6.5 5 L16 5 Z" fill="#b8b8b8"/></svg>
<svg style="position:absolute;left:1907px;top:723px;" width="16" height="15" viewBox="0 0 16 15"><path d="M16 0 L0 0 L0 15 L16 15 L16 10 L6.5 10 L6.5 5 L16 5 Z" fill="#b8b8b8"/></svg>
<div class="t" style="left:1675px;top:751.96px;font-size:16px;line-height:20px;color:#b8b8b8;font-weight:400;">Line Join</div>
<div style="left:1809px;top:747.3px;width:125px;height:28.5px;background:#1e1e1e;border:1px solid #2a2a2a;border-radius:3px;box-sizing:border-box;"></div>
<div style="left:1810px;top:748.3px;width:39px;height:26.5px;background:#141414;"></div>
<div style="left:1850px;top:748.3px;width:1px;height:26.5px;background:#2c2c2c;"></div>
<div style="left:1892px;top:748.3px;width:1px;height:26.5px;background:#2c2c2c;"></div>
<svg style="position:absolute;left:1821.5px;top:754px;" width="15" height="15" viewBox="0 0 15 15"><path d="M0 0 L5.5 0 L5.5 9.5 L15 9.5 L15 15 L0 15 Z" fill="#2d8ceb"/></svg>
<svg style="position:absolute;left:1864px;top:754px;" width="15" height="15" viewBox="0 0 15 15"><path d="M0 0 L5.5 0 L5.5 8.5 C5.5 9.2 6 9.5 6.5 9.5 L15 9.5 L15 15 L6 15 C2.5 15 0 12.5 0 9 Z" fill="#b8b8b8"/></svg>
<svg style="position:absolute;left:1907px;top:754px;" width="15" height="15" viewBox="0 0 15 15"><path d="M0 0 L5.5 0 L5.5 8.5 L6.5 9.5 L15 9.5 L15 15 L5.5 15 L0 9.5 Z" fill="#b8b8b8"/></svg>
<svg style="position:absolute;left:1622px;top:780.7px;" width="18" height="20" viewBox="0 0 18 20"><circle cx="9" cy="11.5" r="7.3" fill="none" stroke="#b8b8b8" stroke-width="1.6"/><path d="M6 1.5 L12 1.5 M9 1.5 L9 4" stroke="#b8b8b8" stroke-width="1.6"/><path d="M2.5 4.5 L4.5 6" stroke="#b8b8b8" stroke-width="1.6"/></svg>
<div class="t" style="left:1675px;top:782.96px;font-size:16px;line-height:20px;color:#b8b8b8;font-weight:400;">Fill Color</div>
<div style="left:1808px;top:780px;width:24px;height:24px;background:#ffffff;"></div>
<svg style="position:absolute;left:1841px;top:781px;" width="22" height="22" viewBox="0 0 22 22"><path d="M14.5 1.8 C16 0.3 19 0.6 20.3 2 C21.7 3.4 21.8 6.2 20.2 7.6 L18.6 9 L13 3.4 Z" fill="#b8b8b8"/><rect x="10.6" y="5.6" width="8.5" height="3.2" transform="rotate(45 14.85 7.2)" fill="#b8b8b8"/><path d="M12.6 8.6 L4.2 17 C2.8 18.4 2.4 20 3.4 21 C4.4 22 6 21.6 7.4 20.2 L15.8 11.8" fill="none" stroke="#b8b8b8" stroke-width="1.5"/></svg>
<div style="left:1873px;top:778px;width:132px;height:27px;background:#1b1b1b;border:1px solid #2c2c2c;border-radius:4px;box-sizing:border-box;"></div>
<div class="t" style="left:1883px;top:782.96px;font-size:16px;line-height:20px;color:#cccccc;font-weight:400;">Solid Color</div>
<svg style="position:absolute;left:1987px;top:787.5px;" width="12" height="8" viewBox="0 0 12 8"><path d="M1 1.5 L6 6.5 L11 1.5" fill="none" stroke="#c8c8c8" stroke-width="1.6"/></svg>
<div style="left:425px;top:35px;width:291px;height:128px;background:#272727;border:1px solid #0a0a0a;box-sizing:border-box;box-shadow:2px 4px 10px rgba(0,0,0,0.18);"></div>
<div style="left:423px;top:0px;width:294px;height:35px;background:#000000;border:4px solid #00f200;box-sizing:border-box;"></div>
<div style="left:436px;top:13px;width:8px;height:7.5px;background:#bdbdbd;"></div>
<svg style="position:absolute;left:459px;top:7px;" width="24" height="21" viewBox="0 0 24 21"><rect x="1" y="1" width="22" height="19" fill="#444" stroke="#bbbbbb" stroke-width="1.6"/></svg>
<svg style="position:absolute;left:459px;top:39.5px;" width="24" height="21" viewBox="0 0 24 21"><rect x="1" y="1" width="22" height="19" rx="5" fill="#444" stroke="#bbbbbb" stroke-width="1.6"/></svg>
<svg style="position:absolute;left:457px;top:71.5px;" width="28" height="21" viewBox="0 0 28 21"><ellipse cx="14" cy="10.5" rx="12.8" ry="9.5" fill="#444" stroke="#bbbbbb" stroke-width="1.6"/></svg>
<svg style="position:absolute;left:458px;top:103.5px;" width="26" height="21" viewBox="0 0 26 21"><path d="M7 1 L19 1 L25 10.5 L19 20 L7 20 L1 10.5 Z" fill="#444" stroke="#bbbbbb" stroke-width="1.6"/></svg>
<svg style="position:absolute;left:459px;top:135.5px;" width="24" height="23" viewBox="0 0 24 23"><path d="M12 1.5 L14.9 8.8 L22.8 9.2 L16.7 14.2 L18.8 21.8 L12 17.6 L5.2 21.8 L7.3 14.2 L1.2 9.2 L9.1 8.8 Z" fill="#444" stroke="#bbbbbb" stroke-width="1.6" stroke-linejoin="round"/></svg>
<div class="t" style="left:491.7px;top:8.69px;font-size:15.9px;line-height:20px;color:#d6d6d6;font-weight:400;">Rectangle Tool</div>
<div class="t" style="left:692px;top:8.69px;font-size:15.9px;line-height:20px;color:#b0b0b0;font-weight:400;">Q</div>
<div class="t" style="left:491.7px;top:40.99px;font-size:15.9px;line-height:20px;color:#b2b2b2;font-weight:400;">Rounded Rectangle Tool</div>
<div class="t" style="left:692px;top:40.99px;font-size:15.9px;line-height:20px;color:#b0b0b0;font-weight:400;">Q</div>
<div class="t" style="left:491.7px;top:73.19px;font-size:15.9px;line-height:20px;color:#b2b2b2;font-weight:400;">Ellipse Tool</div>
<div class="t" style="left:692px;top:73.19px;font-size:15.9px;line-height:20px;color:#b0b0b0;font-weight:400;">Q</div>
<div class="t" style="left:491.7px;top:105.39px;font-size:15.9px;line-height:20px;color:#b2b2b2;font-weight:400;">Polygon Tool</div>
<div class="t" style="left:692px;top:105.39px;font-size:15.9px;line-height:20px;color:#b0b0b0;font-weight:400;">Q</div>
<div class="t" style="left:491.7px;top:137.59px;font-size:15.9px;line-height:20px;color:#b2b2b2;font-weight:400;">Star Tool</div>
<div class="t" style="left:692px;top:137.59px;font-size:15.9px;line-height:20px;color:#b0b0b0;font-weight:400;">Q</div>
<div style="left:2px;top:820px;width:2043px;height:411px;background:#272727;"></div>
<svg style="position:absolute;left:17px;top:838px;" width="9" height="8" viewBox="0 0 9 8"><path d="M1 1 L8 7 M8 1 L1 7" stroke="#b0b0b0" stroke-width="1.3"/></svg>
<div style="left:40px;top:832px;width:14.5px;height:15px;background:#a89677;"></div>
<div class="t" style="left:71px;top:831.93px;font-size:15.5px;line-height:20px;color:#d0d0d0;font-weight:400;">Comp 1</div>
<div style="left:141px;top:836.25px;width:12px;height:1.5px;background:#bdbdbd;"></div>
<div style="left:141px;top:840.85px;width:12px;height:1.5px;background:#bdbdbd;"></div>
<div style="left:141px;top:845.45px;width:12px;height:1.5px;background:#bdbdbd;"></div>
<div class="t" style="left:21px;top:865.95px;font-size:21.8px;line-height:28px;color:#2fa0f7;font-weight:700;">0;00;00;00</div>
<div class="t" style="left:18.5px;top:892.08px;font-size:14.5px;line-height:19px;color:#1f7fcf;font-weight:400;">00000 (29.97 fps)</div>
<div style="left:150px;top:873px;width:716px;height:27px;background:#131313;border:1px solid #2a2a2a;border-radius:4px;box-sizing:border-box;"></div>
<svg style="position:absolute;left:158px;top:877px;" width="27" height="18" viewBox="0 0 27 18"><circle cx="10" cy="6.5" r="5.3" fill="none" stroke="#c0c0c0" stroke-width="1.6"/><path d="M6.3 10.5 L1.5 15.5" stroke="#c0c0c0" stroke-width="1.8" stroke-linecap="round"/><path d="M16 9.5 L25 9.5 L20.5 14 Z" fill="#c0c0c0"/></svg>
<svg style="position:absolute;left:889px;top:878px;" width="27" height="20" viewBox="0 0 27 20"><rect x="5" y="1.5" width="6" height="5" fill="#b4b4b4"/><path d="M0 4 L5 4" stroke="#b4b4b4" stroke-width="1.2"/><rect x="17" y="1" width="7" height="6" fill="#b4b4b4"/><rect x="17" y="10" width="7" height="6" fill="#b4b4b4"/><path d="M11 4 L17 4 M12.5 4 L12.5 13 L17 13" stroke="#b4b4b4" stroke-width="1.3" fill="none"/><path d="M19 14.5 L26 14.5 L22.5 18.5 Z" fill="#b4b4b4"/></svg>
<svg style="position:absolute;left:939px;top:878px;" width="25" height="18" viewBox="0 0 25 18"><rect x="0" y="10" width="24" height="8" fill="#555"/><path d="M4 8 C4 2 8 0.5 12 0.5 C16 0.5 20 2 20 8 L22 8 L22 10 L2 10 L2 8 Z" fill="#b8b8b8"/><rect x="10" y="9" width="4" height="8" rx="2" fill="#b8b8b8"/><circle cx="9" cy="6" r="1.8" fill="#272727"/><circle cx="15" cy="6" r="1.8" fill="#272727"/></svg>
<svg style="position:absolute;left:979px;top:876px;" width="22" height="22" viewBox="0 0 22 22"><path d="M1 5 L4 5 L4 18 L15 18 L15 21 L1 21 Z" fill="#b4b4b4"/><rect x="6" y="1" width="15" height="16" fill="#b4b4b4"/><rect x="8.5" y="2" width="10" height="14" fill="#b4b4b4"/><rect x="7" y="2.5" width="1" height="1.3" fill="#272727"/><rect x="19" y="2.5" width="1" height="1.3" fill="#272727"/><rect x="7" y="5.5" width="1" height="1.3" fill="#272727"/><rect x="19" y="5.5" width="1" height="1.3" fill="#272727"/><rect x="7" y="8.5" width="1" height="1.3" fill="#272727"/><rect x="19" y="8.5" width="1" height="1.3" fill="#272727"/><rect x="7" y="11.5" width="1" height="1.3" fill="#272727"/><rect x="19" y="11.5" width="1" height="1.3" fill="#272727"/><rect x="7" y="14.5" width="1" height="1.3" fill="#272727"/><rect x="19" y="14.5" width="1" height="1.3" fill="#272727"/><rect x="10" y="8" width="7" height="1.5" fill="#272727"/><rect x="1.8" y="7" width="1.2" height="1.2" fill="#272727"/></svg>
<svg style="position:absolute;left:1016px;top:876px;" width="23" height="22" viewBox="0 0 23 22"><circle cx="8" cy="14.5" r="6.5" fill="none" stroke="#b4b4b4" stroke-width="1.5"/><circle cx="11" cy="11.5" r="6.5" fill="#272727" stroke="#b4b4b4" stroke-width="1.5"/><circle cx="14.5" cy="8" r="6.8" fill="#505050" stroke="#b4b4b4" stroke-width="1.5"/></svg>
<svg style="position:absolute;left:1065px;top:874px;" width="25" height="23" viewBox="0 0 25 23"><rect x="1.5" y="4" width="22" height="18" fill="none" stroke="#b4b4b4" stroke-width="1.6"/><path d="M5 1 L5 4 M9.5 1 L9.5 4 M14 1 L14 4 M18.5 1 L18.5 4" stroke="#b4b4b4" stroke-width="1.3"/><path d="M5 9 C10 9 11 17 20 17" fill="none" stroke="#b4b4b4" stroke-width="1.5"/></svg>
<div style="left:3px;top:912px;width:1110px;height:1px;background:#1e1e1e;"></div>
<div style="left:3px;top:913px;width:1110px;height:28px;background:#272727;"></div>
<svg style="position:absolute;left:11px;top:923px;" width="17" height="11" viewBox="0 0 17 11"><path d="M0.5 5.5 C4 0 13 0 16.5 5.5 C13 11 4 11 0.5 5.5 Z" fill="#b8b8b8"/><circle cx="8.5" cy="5.5" r="3" fill="#272727"/><circle cx="9.5" cy="4.3" r="0.9" fill="#b8b8b8"/></svg>
<svg style="position:absolute;left:31px;top:919px;" width="19" height="17" viewBox="0 0 19 17"><path d="M1 5.5 L5 5.5 L10 1 L10 16 L5 11.5 L1 11.5 Z" fill="#b8b8b8"/><path d="M12.5 5 C14 7 14 10 12.5 12 M15 2.5 C18 6 18 11 15 14.5" fill="none" stroke="#b8b8b8" stroke-width="1.4"/></svg>
<svg style="position:absolute;left:57px;top:922px;" width="12" height="12" viewBox="0 0 12 12"><circle cx="6" cy="6" r="5.5" fill="#b8b8b8"/></svg>
<svg style="position:absolute;left:77px;top:919px;" width="15" height="17" viewBox="0 0 15 17"><rect x="1" y="7" width="13" height="9" fill="#b8b8b8"/><path d="M3.5 7 L3.5 5 C3.5 1 11.5 1 11.5 5 L11.5 7" fill="none" stroke="#b8b8b8" stroke-width="1.8"/><circle cx="7.5" cy="11" r="1.5" fill="#272727"/></svg>
<div style="left:101.5px;top:921px;width:2px;height:15px;background:#080808;"></div>
<svg style="position:absolute;left:122px;top:920px;" width="18" height="18" viewBox="0 0 18 18"><path d="M1 1 L9 1 L17 9 L9 17 L1 9 Z" fill="#b8b8b8"/><circle cx="5" cy="5" r="1.6" fill="#272727"/></svg>
<div style="left:148.5px;top:921px;width:2px;height:15px;background:#080808;"></div>
<div class="t" style="left:157.5px;top:921.10px;font-size:13px;line-height:17px;color:#b0b0b0;font-weight:400;">#</div>
<div style="left:197px;top:921px;width:2px;height:15px;background:#080808;"></div>
<div class="t" style="left:205.7px;top:921.03px;font-size:13.2px;line-height:17px;color:#b8b8b8;font-weight:400;">Source Name</div>
<div style="left:472px;top:921px;width:2px;height:15px;background:#080808;"></div>
<svg style="position:absolute;left:480px;top:920px;" width="19" height="15" viewBox="0 0 19 15"><path d="M3 10 C3 3 6 0.5 9.5 0.5 C13 0.5 16 3 16 10 Z" fill="#b8b8b8"/><rect x="0" y="10" width="6" height="1.5" fill="#b8b8b8"/><rect x="13" y="10" width="6" height="1.5" fill="#b8b8b8"/><rect x="7.5" y="8" width="4" height="7" rx="2" fill="#b8b8b8"/><circle cx="7" cy="5.5" r="1.6" fill="#272727"/><circle cx="12" cy="5.5" r="1.6" fill="#272727"/></svg>
<svg style="position:absolute;left:503px;top:919px;" width="15" height="16" viewBox="0 0 15 16"><circle cx="7.5" cy="8" r="3.2" fill="none" stroke="#b8b8b8" stroke-width="1.5"/><path d="M7.5 0.5 L7.5 3.5 M7.5 12.5 L7.5 15.5 M0 8 L3 8 M12 8 L15 8 M2.2 2.7 L4.3 4.8 M10.7 11.2 L12.8 13.3 M12.8 2.7 L10.7 4.8 M4.3 11.2 L2.2 13.3" stroke="#b8b8b8" stroke-width="1.5"/></svg>
<svg style="position:absolute;left:524px;top:919px;" width="17" height="17" viewBox="0 0 17 17"><path d="M1 1 L16 16" stroke="#b8b8b8" stroke-width="2.5" stroke-dasharray="2.5 1.5"/></svg>
<div class="t" style="left:546px;top:916.56px;font-size:18px;line-height:23px;color:#b8b8b8;font-weight:400;font-family:"Liberation Serif",serif;"><i>fx</i></div>
<svg style="position:absolute;left:567px;top:919px;" width="19" height="16" viewBox="0 0 19 16"><path d="M1 3 L2.5 3 L2.5 14 L16 14 L16 15.5 L1 15.5 Z" fill="#b8b8b8"/><rect x="4" y="1" width="14" height="12" fill="#b8b8b8"/><rect x="5" y="2.0" width="1" height="1.2" fill="#272727"/><rect x="16" y="2.0" width="1" height="1.2" fill="#272727"/><rect x="5" y="4.3" width="1" height="1.2" fill="#272727"/><rect x="16" y="4.3" width="1" height="1.2" fill="#272727"/><rect x="5" y="6.6" width="1" height="1.2" fill="#272727"/><rect x="16" y="6.6" width="1" height="1.2" fill="#272727"/><rect x="5" y="8.899999999999999" width="1" height="1.2" fill="#272727"/><rect x="16" y="8.899999999999999" width="1" height="1.2" fill="#272727"/><rect x="5" y="11.2" width="1" height="1.2" fill="#272727"/><rect x="16" y="11.2" width="1" height="1.2" fill="#272727"/><rect x="8" y="6" width="6" height="1.6" fill="#272727"/></svg>
<svg style="position:absolute;left:589px;top:918px;" width="20" height="19" viewBox="0 0 20 19"><circle cx="6.5" cy="12.5" r="5.5" fill="none" stroke="#b8b8b8" stroke-width="1.3"/><circle cx="9" cy="10" r="5.5" fill="#272727" stroke="#b8b8b8" stroke-width="1.3"/><circle cx="12.5" cy="7" r="6" fill="#7a7a7a" stroke="#b8b8b8" stroke-width="1.3"/></svg>
<svg style="position:absolute;left:614px;top:920px;" width="15" height="15" viewBox="0 0 15 15"><circle cx="7.5" cy="7.5" r="6.7" fill="#b8b8b8"/><path d="M12 3 L3 12 A6 6 0 0 1 12 3 Z" fill="#272727"/></svg>
<svg style="position:absolute;left:636px;top:920px;" width="15" height="15" viewBox="0 0 15 15"><path d="M7.5 1 L14 4.5 L14 11 L7.5 14.5 L1 11 L1 4.5 Z M1 4.5 L7.5 8 L14 4.5 M7.5 8 L7.5 14.5" fill="none" stroke="#b8b8b8" stroke-width="1.3"/></svg>
<div style="left:673px;top:921px;width:2px;height:15px;background:#080808;"></div>
<div class="t" style="left:682.7px;top:921.16px;font-size:13.4px;line-height:17px;color:#b8b8b8;font-weight:400;">Mode</div>
<div class="t" style="left:758.4px;top:921.16px;font-size:13.4px;line-height:17px;color:#b8b8b8;font-weight:400;">T</div>
<div class="t" style="left:783.8px;top:921.23px;font-size:13.2px;line-height:17px;color:#b8b8b8;font-weight:400;">Track Matte</div>
<svg style="position:absolute;left:875px;top:920px;" width="16" height="16" viewBox="0 0 16 16"><rect x="0" y="0" width="16" height="16" fill="#b8b8b8"/><circle cx="8" cy="8" r="5.3" fill="#1a1a1a"/></svg>
<svg style="position:absolute;left:897px;top:920px;" width="16" height="16" viewBox="0 0 16 16"><path d="M0 0 L16 0 L0 16 Z" fill="#b8b8b8"/><path d="M16 0 L0 16" stroke="#b8b8b8"/><circle cx="8" cy="8" r="5" fill="#1a1a1a"/><path d="M4 12 L14 2" stroke="#b8b8b8" stroke-width="1.4"/><path d="M16 0 L16 3 L13 3" fill="#b8b8b8"/></svg>
<div style="left:917px;top:921px;width:2px;height:15px;background:#080808;"></div>
<div class="t" style="left:926.6px;top:921.16px;font-size:13.4px;line-height:17px;color:#b8b8b8;font-weight:400;">Parent &amp; Link</div>
<div style="left:1089px;top:921px;width:2px;height:15px;background:#080808;"></div>
<div style="left:3px;top:941px;width:1110px;height:1px;background:#1e1e1e;"></div>
<div style="left:3px;top:942px;width:1110px;height:24px;background:#474747;"></div>
<div style="left:3px;top:966px;width:1110px;height:26px;background:#272727;"></div>
<div style="left:3px;top:991px;width:1110px;height:1px;background:#1e1e1e;"></div>
<div style="left:3px;top:992px;width:1110px;height:24px;background:#272727;"></div>
<div style="left:3px;top:1015.5px;width:1110px;height:1px;background:#1e1e1e;"></div>
<div style="left:3px;top:1016px;width:1110px;height:26px;background:#272727;"></div>
<div style="left:3px;top:1041px;width:1110px;height:1px;background:#1e1e1e;"></div>
<div style="left:3px;top:1042px;width:1110px;height:24px;background:#2c2c2c;"></div>
<div style="left:3px;top:1066px;width:1110px;height:1px;background:#1e1e1e;"></div>
<div style="left:9px;top:944px;width:19px;height:19px;background:#343434;"></div>
<svg style="position:absolute;left:10px;top:948px;" width="17" height="11" viewBox="0 0 17 11"><path d="M0.5 5.5 C4 0 13 0 16.5 5.5 C13 11 4 11 0.5 5.5 Z" fill="#c8c8c8"/><circle cx="8.5" cy="5.5" r="3" fill="#343434"/><circle cx="9.5" cy="4.3" r="0.9" fill="#c8c8c8"/></svg>
<div style="left:53px;top:944px;width:19px;height:19px;background:#363636;"></div>
<div style="left:75px;top:944px;width:19px;height:19px;background:#363636;"></div>
<svg style="position:absolute;left:111px;top:951px;" width="12" height="8" viewBox="0 0 12 8"><path d="M1 1 L6 6.5 L11 1" fill="none" stroke="#c0c0c0" stroke-width="1.5"/></svg>
<div style="left:128px;top:945px;width:18px;height:18px;background:#6b80e1;"></div>
<div class="t" style="left:159.5px;top:945.16px;font-size:16px;line-height:20px;color:#c8c8c8;font-weight:400;">1</div>
<svg style="position:absolute;left:202px;top:945px;" width="18" height="18" viewBox="0 0 18 18"><path d="M9.0 0.5 L11.34 6.48 L17.5 6.84 L12.60 11.16 L14.58 17.5 L9.0 14.22 L3.42 17.5 L5.40 11.16 L0.5 6.84 L6.66 6.48 Z" fill="#c4c4c4"/></svg>
<div style="left:225px;top:942px;width:247px;height:24px;background:#454545;border:2.5px solid #acacac;box-sizing:border-box;"></div>
<div class="t" style="left:229.5px;top:945.16px;font-size:16px;line-height:20px;color:#d0d0d0;font-weight:400;-webkit-text-stroke:0.6px #d0d0d0;">Shape Layer 1</div>
<div style="left:479px;top:944px;width:19px;height:19px;background:#3b3b3b;"></div>
<div style="left:501px;top:944px;width:19px;height:19px;background:#3b3b3b;"></div>
<div style="left:523px;top:944px;width:19px;height:19px;background:#3b3b3b;"></div>
<svg style="position:absolute;left:479.5px;top:946px;" width="19" height="15" viewBox="0 0 19 15"><path d="M3 10 C3 3 6 0.5 9.5 0.5 C13 0.5 16 3 16 10 Z" fill="#c0c0c0"/><rect x="0" y="10" width="6" height="1.5" fill="#c0c0c0"/><rect x="13" y="10" width="6" height="1.5" fill="#c0c0c0"/><rect x="7.5" y="8" width="4" height="7" rx="2" fill="#c0c0c0"/><circle cx="7" cy="5.5" r="1.6" fill="#3b3b3b"/><circle cx="12" cy="5.5" r="1.6" fill="#3b3b3b"/></svg>
<svg style="position:absolute;left:503px;top:945px;" width="15" height="16" viewBox="0 0 15 16"><circle cx="7.5" cy="8" r="3" fill="none" stroke="#9a9a9a" stroke-width="1.2"/><path d="M7.5 0.5 L7.5 3.5 M7.5 12.5 L7.5 15.5 M0 8 L3 8 M12 8 L15 8 M2.2 2.7 L4.3 4.8 M10.7 11.2 L12.8 13.3 M12.8 2.7 L10.7 4.8 M4.3 11.2 L2.2 13.3" stroke="#9a9a9a" stroke-width="1.2"/></svg>
<svg style="position:absolute;left:524px;top:945px;" width="18" height="17" viewBox="0 0 18 17"><path d="M2 15.5 L16 1.5" stroke="#c0c0c0" stroke-width="1.8" stroke-linecap="round"/></svg>
<div style="left:590px;top:944px;width:19px;height:19px;background:#3b3b3b;"></div>
<div style="left:612px;top:944px;width:19px;height:19px;background:#3b3b3b;"></div>
<div style="left:634px;top:944px;width:19px;height:19px;background:#3b3b3b;"></div>
<div style="left:679px;top:944px;width:66px;height:20px;background:#1e1e1e;"></div>
<div class="t" style="left:688.4px;top:944.86px;font-size:16px;line-height:20px;color:#cccccc;font-weight:400;">Norn</div>
<svg style="position:absolute;left:727px;top:951px;" width="12" height="8" viewBox="0 0 12 8"><path d="M1 1 L6 6.5 L11 1" fill="none" stroke="#c0c0c0" stroke-width="1.5"/></svg>
<div style="left:745px;top:942px;width:2px;height:24px;background:#272727;"></div>
<div style="left:753px;top:944px;width:19px;height:19px;background:#373737;"></div>
<svg style="position:absolute;left:779.5px;top:946px;" width="18" height="17" viewBox="0 0 18 17"><path d="M7.20 8.00 L7.13 7.89 L7.07 7.76 L7.04 7.62 L7.02 7.46 L7.03 7.30 L7.07 7.13 L7.14 6.96 L7.23 6.79 L7.36 6.63 L7.51 6.49 L7.69 6.36 L7.89 6.26 L8.11 6.18 L8.36 6.13 L8.61 6.12 L8.88 6.14 L9.15 6.19 L9.41 6.29 L9.67 6.43 L9.92 6.60 L10.15 6.82 L10.35 7.07 L10.53 7.35 L10.67 7.66 L10.77 8.00 L10.83 8.36 L10.83 8.73 L10.79 9.11 L10.70 9.49 L10.56 9.86 L10.36 10.22 L10.12 10.56 L9.82 10.87 L9.48 11.15 L9.10 11.38 L8.68 11.57 L8.23 11.71 L7.76 11.79 L7.27 11.80 L6.78 11.76 L6.28 11.65 L5.80 11.47 L5.33 11.23 L4.89 10.92 L4.49 10.55 L4.12 10.13 L3.81 9.66 L3.56 9.14 L3.38 8.58 L3.26 8.00 L3.22 7.40 L3.26 6.78 L3.38 6.17 L3.57 5.57 L3.85 4.98 L4.20 4.43 L4.63 3.92 L5.12 3.47 L5.68 3.07 L6.29 2.75 L6.95 2.50 L7.64 2.33 L8.36 2.25 L9.09 2.26 L9.83 2.37 L10.55 2.57 L11.26 2.87 L11.92 3.26 L12.54 3.73 L13.11 4.29 L13.60 4.92 L14.02 5.62 L14.34 6.37 L14.58 7.17 L14.71 8.00 L14.73 8.85 L14.65 9.71 L14.45 10.56 L14.15 11.38 L13.74 12.17" fill="none" stroke="#bdbdbd" stroke-width="1.3"/><rect x="13.5" y="10" width="2.6" height="2.6" fill="#bdbdbd"/><rect x="11" y="12.6" width="2.6" height="2.6" fill="#bdbdbd"/><rect x="15.2" y="1" width="1.2" height="5" fill="#bdbdbd"/></svg>
<div style="left:803px;top:944px;width:66px;height:20px;background:#1e1e1e;"></div>
<div class="t" style="left:812.2px;top:944.86px;font-size:16px;line-height:20px;color:#cccccc;font-weight:400;clip-path:inset(0 4px 0 0);">No M</div>
<svg style="position:absolute;left:851px;top:951px;" width="12" height="8" viewBox="0 0 12 8"><path d="M1 1 L6 6.5 L11 1" fill="none" stroke="#c0c0c0" stroke-width="1.5"/></svg>
<svg style="position:absolute;left:924.5px;top:944px;" width="21" height="20" viewBox="0 0 16.8 16"><path d="M7.20 8.00 L7.13 7.89 L7.07 7.76 L7.04 7.62 L7.02 7.46 L7.03 7.30 L7.07 7.13 L7.14 6.96 L7.23 6.79 L7.36 6.63 L7.51 6.49 L7.69 6.36 L7.89 6.26 L8.11 6.18 L8.36 6.13 L8.61 6.12 L8.88 6.14 L9.15 6.19 L9.41 6.29 L9.67 6.43 L9.92 6.60 L10.15 6.82 L10.35 7.07 L10.53 7.35 L10.67 7.66 L10.77 8.00 L10.83 8.36 L10.83 8.73 L10.79 9.11 L10.70 9.49 L10.56 9.86 L10.36 10.22 L10.12 10.56 L9.82 10.87 L9.48 11.15 L9.10 11.38 L8.68 11.57 L8.23 11.71 L7.76 11.79 L7.27 11.80 L6.78 11.76 L6.28 11.65 L5.80 11.47 L5.33 11.23 L4.89 10.92 L4.49 10.55 L4.12 10.13 L3.81 9.66 L3.56 9.14 L3.38 8.58 L3.26 8.00 L3.22 7.40 L3.26 6.78 L3.38 6.17 L3.57 5.57 L3.85 4.98 L4.20 4.43 L4.63 3.92 L5.12 3.47 L5.68 3.07 L6.29 2.75 L6.95 2.50 L7.64 2.33 L8.36 2.25 L9.09 2.26 L9.83 2.37 L10.55 2.57 L11.26 2.87 L11.92 3.26 L12.54 3.73 L13.11 4.29 L13.60 4.92 L14.02 5.62 L14.34 6.37 L14.58 7.17 L14.71 8.00 L14.73 8.85 L14.65 9.71 L14.45 10.56 L14.15 11.38 L13.74 12.17" fill="none" stroke="#bdbdbd" stroke-width="1.1"/></svg>
<div style="left:953px;top:944px;width:131px;height:20px;background:#1e1e1e;"></div>
<div class="t" style="left:962.2px;top:944.86px;font-size:16px;line-height:20px;color:#cccccc;font-weight:400;">None</div>
<svg style="position:absolute;left:1065px;top:951px;" width="12" height="8" viewBox="0 0 12 8"><path d="M1 1 L6 6.5 L11 1" fill="none" stroke="#c0c0c0" stroke-width="1.5"/></svg>
<svg style="position:absolute;left:136px;top:975px;" width="12" height="8" viewBox="0 0 12 8"><path d="M1 1 L6 6.5 L11 1" fill="none" stroke="#c0c0c0" stroke-width="1.5"/></svg>
<div class="t" style="left:158.8px;top:971.59px;font-size:15.9px;line-height:20px;color:#c0c0c0;font-weight:400;">Contents</div>
<div class="t" style="left:612px;top:971.56px;font-size:16px;line-height:20px;color:#c0c0c0;font-weight:400;">Add:</div>
<svg style="position:absolute;left:649px;top:970px;" width="17" height="17" viewBox="0 0 17 17"><circle cx="8.5" cy="8.5" r="8" fill="#c0c0c0"/><path d="M6.5 4.5 L12 8.5 L6.5 12.5 Z" fill="#272727"/></svg>
<div style="left:9px;top:994px;width:20px;height:20px;background:#1a1a1a;"></div>
<svg style="position:absolute;left:10px;top:999px;" width="17" height="11" viewBox="0 0 17 11"><path d="M0.5 5.5 C4 0 13 0 16.5 5.5 C13 11 4 11 0.5 5.5 Z" fill="#c8c8c8"/><circle cx="8.5" cy="5.5" r="3" fill="#1a1a1a"/><circle cx="9.5" cy="4.3" r="0.9" fill="#c8c8c8"/></svg>
<svg style="position:absolute;left:161px;top:998px;" width="8" height="12" viewBox="0 0 8 12"><path d="M1 1 L6.5 6 L1 11" fill="none" stroke="#c0c0c0" stroke-width="1.5"/></svg>
<div style="left:179px;top:992px;width:294px;height:24px;background:#4e4e4e;"></div>
<div class="t" style="left:184px;top:995.16px;font-size:16px;line-height:20px;color:#c4c4c4;font-weight:400;">Rectangle 1</div>
<div style="left:480px;top:993px;width:187px;height:23px;background:#1b1b1b;border:1px solid #2c2c2c;box-sizing:border-box;"></div>
<div class="t" style="left:490.4px;top:995.16px;font-size:16px;line-height:20px;color:#cccccc;font-weight:400;">Normal</div>
<svg style="position:absolute;left:647px;top:1000px;" width="12" height="8" viewBox="0 0 12 8"><path d="M1 1 L6 6.5 L11 1" fill="none" stroke="#c0c0c0" stroke-width="1.5"/></svg>
<svg style="position:absolute;left:137px;top:1024px;" width="8" height="12" viewBox="0 0 8 12"><path d="M1 1 L6.5 6 L1 11" fill="none" stroke="#c0c0c0" stroke-width="1.5"/></svg>
<div class="t" style="left:158.8px;top:1019.99px;font-size:15.9px;line-height:20px;color:#c0c0c0;font-weight:400;">Transform</div>
<div class="t" style="left:480.3px;top:1020.13px;font-size:15.5px;line-height:20px;color:#3a9cf0;font-weight:400;">Reset</div>
<div style="left:9px;top:1044px;width:19px;height:19px;background:#1f1f1f;"></div>
<svg style="position:absolute;left:10px;top:1048px;" width="17" height="11" viewBox="0 0 17 11"><path d="M0.5 5.5 C4 0 13 0 16.5 5.5 C13 11 4 11 0.5 5.5 Z" fill="#c8c8c8"/><circle cx="8.5" cy="5.5" r="3" fill="#1f1f1f"/><circle cx="9.5" cy="4.3" r="0.9" fill="#c8c8c8"/></svg>
<div style="left:53px;top:1044px;width:19px;height:19px;background:#1f1f1f;"></div>
<div style="left:75px;top:1044px;width:19px;height:19px;background:#1f1f1f;"></div>
<svg style="position:absolute;left:111px;top:1048px;" width="8" height="12" viewBox="0 0 8 12"><path d="M1 1 L6.5 6 L1 11" fill="none" stroke="#c0c0c0" stroke-width="1.5"/></svg>
<div style="left:128px;top:1045px;width:18px;height:18px;background:#ab9a7b;"></div>
<div class="t" style="left:159.5px;top:1045.26px;font-size:16px;line-height:20px;color:#c8c8c8;font-weight:400;">2</div>
<svg style="position:absolute;left:200px;top:1044px;" width="23" height="19" viewBox="0 0 23 19"><rect x="0" y="0" width="23" height="19" fill="#b8b8b8"/><rect x="3.5" y="2" width="16" height="14" fill="#2a2a2a"/><rect x="1" y="2.0" width="1.5" height="1.8" fill="#2a2a2a"/><rect x="20.5" y="2.0" width="1.5" height="1.8" fill="#2a2a2a"/><rect x="1" y="5.5" width="1.5" height="1.8" fill="#2a2a2a"/><rect x="20.5" y="5.5" width="1.5" height="1.8" fill="#2a2a2a"/><rect x="1" y="9.0" width="1.5" height="1.8" fill="#2a2a2a"/><rect x="20.5" y="9.0" width="1.5" height="1.8" fill="#2a2a2a"/><rect x="1" y="12.5" width="1.5" height="1.8" fill="#2a2a2a"/><rect x="20.5" y="12.5" width="1.5" height="1.8" fill="#2a2a2a"/><rect x="1" y="16.0" width="1.5" height="1.8" fill="#2a2a2a"/><rect x="20.5" y="16.0" width="1.5" height="1.8" fill="#2a2a2a"/><rect x="3.5" y="2" width="16" height="14" fill="#b8b8b8"/><rect x="12.65" y="5.7" width="5.75" height="6.6499999999999995" fill="#e52a2a" stroke="#222" stroke-width="0.6"/><circle cx="7.590000000000001" cy="6.08" r="3.2300000000000004" fill="#2d8ceb" stroke="#222" stroke-width="0.6"/><path d="M6.44 14.82 L10.35 7.9799999999999995 L14.26 14.82 Z" fill="#1fa02a" stroke="#222" stroke-width="0.6"/><rect x="4" y="16.4" width="15" height="1.2" fill="#2a2a2a"/></svg>
<div class="t" style="left:229.7px;top:1045.26px;font-size:16px;line-height:20px;color:#d0d0d0;font-weight:400;-webkit-text-stroke:0.6px #d0d0d0;">Map</div>
<div style="left:479px;top:1044px;width:19px;height:19px;background:#1f1f1f;"></div>
<div style="left:501px;top:1044px;width:19px;height:19px;background:#1f1f1f;"></div>
<div style="left:523px;top:1044px;width:19px;height:19px;background:#1f1f1f;"></div>
<svg style="position:absolute;left:479.5px;top:1046px;" width="19" height="15" viewBox="0 0 19 15"><path d="M3 10 C3 3 6 0.5 9.5 0.5 C13 0.5 16 3 16 10 Z" fill="#c0c0c0"/><rect x="0" y="10" width="6" height="1.5" fill="#c0c0c0"/><rect x="13" y="10" width="6" height="1.5" fill="#c0c0c0"/><rect x="7.5" y="8" width="4" height="7" rx="2" fill="#c0c0c0"/><circle cx="7" cy="5.5" r="1.6" fill="#1f1f1f"/><circle cx="12" cy="5.5" r="1.6" fill="#1f1f1f"/></svg>
<svg style="position:absolute;left:524px;top:1045px;" width="18" height="17" viewBox="0 0 18 17"><path d="M2 15.5 L16 1.5" stroke="#c0c0c0" stroke-width="1.8" stroke-linecap="round"/></svg>
<div style="left:590px;top:1044px;width:19px;height:19px;background:#1f1f1f;"></div>
<div style="left:612px;top:1044px;width:19px;height:19px;background:#1f1f1f;"></div>
<div style="left:634px;top:1044px;width:19px;height:19px;background:#1f1f1f;"></div>
<div style="left:679px;top:1044px;width:66px;height:20px;background:#1e1e1e;"></div>
<div class="t" style="left:688.4px;top:1044.86px;font-size:16px;line-height:20px;color:#cccccc;font-weight:400;">Norn</div>
<svg style="position:absolute;left:727px;top:1051px;" width="12" height="8" viewBox="0 0 12 8"><path d="M1 1 L6 6.5 L11 1" fill="none" stroke="#c0c0c0" stroke-width="1.5"/></svg>
<div style="left:753px;top:1044px;width:19px;height:19px;background:#1f1f1f;"></div>
<svg style="position:absolute;left:779.5px;top:1046px;" width="18" height="17" viewBox="0 0 18 17"><path d="M7.20 8.00 L7.13 7.89 L7.07 7.76 L7.04 7.62 L7.02 7.46 L7.03 7.30 L7.07 7.13 L7.14 6.96 L7.23 6.79 L7.36 6.63 L7.51 6.49 L7.69 6.36 L7.89 6.26 L8.11 6.18 L8.36 6.13 L8.61 6.12 L8.88 6.14 L9.15 6.19 L9.41 6.29 L9.67 6.43 L9.92 6.60 L10.15 6.82 L10.35 7.07 L10.53 7.35 L10.67 7.66 L10.77 8.00 L10.83 8.36 L10.83 8.73 L10.79 9.11 L10.70 9.49 L10.56 9.86 L10.36 10.22 L10.12 10.56 L9.82 10.87 L9.48 11.15 L9.10 11.38 L8.68 11.57 L8.23 11.71 L7.76 11.79 L7.27 11.80 L6.78 11.76 L6.28 11.65 L5.80 11.47 L5.33 11.23 L4.89 10.92 L4.49 10.55 L4.12 10.13 L3.81 9.66 L3.56 9.14 L3.38 8.58 L3.26 8.00 L3.22 7.40 L3.26 6.78 L3.38 6.17 L3.57 5.57 L3.85 4.98 L4.20 4.43 L4.63 3.92 L5.12 3.47 L5.68 3.07 L6.29 2.75 L6.95 2.50 L7.64 2.33 L8.36 2.25 L9.09 2.26 L9.83 2.37 L10.55 2.57 L11.26 2.87 L11.92 3.26 L12.54 3.73 L13.11 4.29 L13.60 4.92 L14.02 5.62 L14.34 6.37 L14.58 7.17 L14.71 8.00 L14.73 8.85 L14.65 9.71 L14.45 10.56 L14.15 11.38 L13.74 12.17" fill="none" stroke="#bdbdbd" stroke-width="1.3"/><rect x="13.5" y="10" width="2.6" height="2.6" fill="#bdbdbd"/><rect x="11" y="12.6" width="2.6" height="2.6" fill="#bdbdbd"/><rect x="15.2" y="1" width="1.2" height="5" fill="#bdbdbd"/></svg>
<div style="left:803px;top:1044px;width:66px;height:20px;background:#1e1e1e;"></div>
<div class="t" style="left:812.2px;top:1044.86px;font-size:16px;line-height:20px;color:#cccccc;font-weight:400;clip-path:inset(0 4px 0 0);">No M</div>
<svg style="position:absolute;left:851px;top:1051px;" width="12" height="8" viewBox="0 0 12 8"><path d="M1 1 L6 6.5 L11 1" fill="none" stroke="#c0c0c0" stroke-width="1.5"/></svg>
<svg style="position:absolute;left:924.5px;top:1044px;" width="21" height="20" viewBox="0 0 16.8 16"><path d="M7.20 8.00 L7.13 7.89 L7.07 7.76 L7.04 7.62 L7.02 7.46 L7.03 7.30 L7.07 7.13 L7.14 6.96 L7.23 6.79 L7.36 6.63 L7.51 6.49 L7.69 6.36 L7.89 6.26 L8.11 6.18 L8.36 6.13 L8.61 6.12 L8.88 6.14 L9.15 6.19 L9.41 6.29 L9.67 6.43 L9.92 6.60 L10.15 6.82 L10.35 7.07 L10.53 7.35 L10.67 7.66 L10.77 8.00 L10.83 8.36 L10.83 8.73 L10.79 9.11 L10.70 9.49 L10.56 9.86 L10.36 10.22 L10.12 10.56 L9.82 10.87 L9.48 11.15 L9.10 11.38 L8.68 11.57 L8.23 11.71 L7.76 11.79 L7.27 11.80 L6.78 11.76 L6.28 11.65 L5.80 11.47 L5.33 11.23 L4.89 10.92 L4.49 10.55 L4.12 10.13 L3.81 9.66 L3.56 9.14 L3.38 8.58 L3.26 8.00 L3.22 7.40 L3.26 6.78 L3.38 6.17 L3.57 5.57 L3.85 4.98 L4.20 4.43 L4.63 3.92 L5.12 3.47 L5.68 3.07 L6.29 2.75 L6.95 2.50 L7.64 2.33 L8.36 2.25 L9.09 2.26 L9.83 2.37 L10.55 2.57 L11.26 2.87 L11.92 3.26 L12.54 3.73 L13.11 4.29 L13.60 4.92 L14.02 5.62 L14.34 6.37 L14.58 7.17 L14.71 8.00 L14.73 8.85 L14.65 9.71 L14.45 10.56 L14.15 11.38 L13.74 12.17" fill="none" stroke="#bdbdbd" stroke-width="1.1"/></svg>
<div style="left:953px;top:1044px;width:131px;height:20px;background:#1e1e1e;"></div>
<div class="t" style="left:962.2px;top:1044.86px;font-size:16px;line-height:20px;color:#cccccc;font-weight:400;">None</div>
<svg style="position:absolute;left:1065px;top:1051px;" width="12" height="8" viewBox="0 0 12 8"><path d="M1 1 L6 6.5 L11 1" fill="none" stroke="#c0c0c0" stroke-width="1.5"/></svg>
<div style="left:1113px;top:876px;width:1.2px;height:65px;background:#1c1c1c;"></div>
<div style="left:1113px;top:941px;width:1.6px;height:290px;background:#080808;"></div>
<div style="left:1114px;top:868px;width:906px;height:73px;background:#242424;border-radius:9px 0 0 0;"></div>
<div style="left:1114.5px;top:883px;width:10px;height:29px;background:#202020;"></div>
<div style="left:1114.5px;top:966px;width:905.5px;height:265px;background:#353535;"></div>
<div style="left:1114.5px;top:990.5px;width:905.5px;height:1.2px;background:#292929;"></div>
<div style="left:1114.5px;top:1015.5px;width:905.5px;height:1.2px;background:#292929;"></div>
<div style="left:1114.5px;top:1041px;width:905.5px;height:1.2px;background:#292929;"></div>
<div style="left:1114.5px;top:1066px;width:905.5px;height:1.2px;background:#292929;"></div>
<div style="left:2010px;top:966px;width:10px;height:263px;background:#292929;"></div>
<div style="left:1114.5px;top:966px;width:10px;height:265px;background:#2e2e2e;"></div>
<div style="left:1114.5px;top:942px;width:905.5px;height:24px;background:#474747;"></div>
<div style="left:1114px;top:868.6px;width:906px;height:14.4px;background:#0a0a0a;border-radius:9px 9px 0 0;"></div>
<div style="left:1125px;top:870.3px;width:885px;height:11.5px;background:#686868;"></div>
<svg style="position:absolute;left:1114.2px;top:870.3px;" width="9" height="11.5" viewBox="0 0 9 11.5"><path d="M9 0 L6 0 C2 0 0 2.5 0 5.75 C0 9 2 11.5 6 11.5 L9 11.5 Z" fill="#2d8ceb"/></svg>
<div style="left:1124.9px;top:870.3px;width:2px;height:11.5px;background:#2d8ceb;"></div>
<svg style="position:absolute;left:2011px;top:870.3px;" width="9" height="11.5" viewBox="0 0 9 11.5"><path d="M0 0 L3 0 C7 0 9 2.5 9 5.75 C9 9 7 11.5 3 11.5 L0 11.5 Z" fill="#2d8ceb"/></svg>
<div class="t" style="left:1109px;top:886.3px;font-size:14.5px;line-height:19px;color:#a8a8a8;clip-path:inset(0 0 0 6px);">0:00s</div>
<div style="left:1213.0px;top:904.5px;width:1.2px;height:6.5px;background:#a0a0a0;"></div>
<div class="t" style="left:1153.5px;top:886.3px;width:120px;text-align:center;font-size:14.5px;line-height:19px;color:#a8a8a8;">02s</div>
<div style="left:1301.5px;top:904.5px;width:1.2px;height:6.5px;background:#a0a0a0;"></div>
<div class="t" style="left:1242.0px;top:886.3px;width:120px;text-align:center;font-size:14.5px;line-height:19px;color:#a8a8a8;">04s</div>
<div style="left:1390.0px;top:904.5px;width:1.2px;height:6.5px;background:#a0a0a0;"></div>
<div class="t" style="left:1330.5px;top:886.3px;width:120px;text-align:center;font-size:14.5px;line-height:19px;color:#a8a8a8;">06s</div>
<div style="left:1478.5px;top:904.5px;width:1.2px;height:6.5px;background:#a0a0a0;"></div>
<div class="t" style="left:1419.0px;top:886.3px;width:120px;text-align:center;font-size:14.5px;line-height:19px;color:#a8a8a8;">08s</div>
<div style="left:1567.0px;top:904.5px;width:1.2px;height:6.5px;background:#a0a0a0;"></div>
<div class="t" style="left:1507.5px;top:886.3px;width:120px;text-align:center;font-size:14.5px;line-height:19px;color:#a8a8a8;">10s</div>
<div style="left:1655.5px;top:904.5px;width:1.2px;height:6.5px;background:#a0a0a0;"></div>
<div class="t" style="left:1596.0px;top:886.3px;width:120px;text-align:center;font-size:14.5px;line-height:19px;color:#a8a8a8;">12s</div>
<div style="left:1744.0px;top:904.5px;width:1.2px;height:6.5px;background:#a0a0a0;"></div>
<div class="t" style="left:1684.5px;top:886.3px;width:120px;text-align:center;font-size:14.5px;line-height:19px;color:#a8a8a8;">14s</div>
<div style="left:1832.5px;top:904.5px;width:1.2px;height:6.5px;background:#a0a0a0;"></div>
<div class="t" style="left:1773.0px;top:886.3px;width:120px;text-align:center;font-size:14.5px;line-height:19px;color:#a8a8a8;">16s</div>
<div style="left:1921.0px;top:904.5px;width:1.2px;height:6.5px;background:#a0a0a0;"></div>
<div class="t" style="left:1861.5px;top:886.3px;width:120px;text-align:center;font-size:14.5px;line-height:19px;color:#a8a8a8;">18s</div>
<div style="left:2009.5px;top:904.5px;width:1.2px;height:6.5px;background:#a0a0a0;"></div>
<div class="t" style="left:1950.0px;top:886.3px;width:120px;text-align:center;font-size:14.5px;line-height:19px;color:#a8a8a8;">20s</div>
<div style="left:1114.5px;top:911.6px;width:905.5px;height:25px;background:#0a0a0a;"></div>
<div style="left:1124.5px;top:913px;width:885.5px;height:22px;background:#636363;"></div>
<svg style="position:absolute;left:1115.8px;top:913px;" width="7.4" height="22" viewBox="0 0 7.4 22"><path d="M7.4 0 L5 0 C1.5 0 0 2 0 5.5 L0 16.5 C0 20 1.5 22 5 22 L7.4 22 Z" fill="#2d8ceb"/></svg>
<svg style="position:absolute;left:2011px;top:913px;" width="8.8" height="22" viewBox="0 0 8.8 22"><path d="M0 0 L3.5 0 C7 0 8.8 2 8.8 5.5 L8.8 16.5 C8.8 20 7 22 3.5 22 L0 22 Z" fill="#2d8ceb"/></svg>
<div style="left:1125.5px;top:942px;width:884.5px;height:24px;background:linear-gradient(#7b8ee8 0px,#6a7de0 2px,#5e71d8 12px,#5062cc 24px);"></div>
<div style="left:1126px;top:1042px;width:884px;height:24px;background:#756c5a;"></div>
<svg style="position:absolute;left:1126px;top:1042px;" width="8" height="8" viewBox="0 0 8 8"><path d="M0 0 L8 0 C3 0 0 3 0 8 Z" fill="#37342c"/></svg>
<svg style="position:absolute;left:2002px;top:1042px;" width="8" height="8" viewBox="0 0 8 8"><path d="M8 0 L0 0 C5 0 8 3 8 8 Z" fill="#37342c"/></svg>
<svg style="position:absolute;left:1120px;top:972px;" width="11" height="16" viewBox="0 0 11 16"><path d="M0 0.8 L11 0.8 M0 15.2 L11 15.2" stroke="#b8b8b8" stroke-width="1.5"/><rect x="2.8" y="0" width="3.9" height="16" fill="#b8b8b8"/></svg>
<svg style="position:absolute;left:1120px;top:997px;" width="11" height="16" viewBox="0 0 11 16"><path d="M0 0.8 L11 0.8 M0 15.2 L11 15.2" stroke="#b8b8b8" stroke-width="1.5"/><rect x="2.8" y="0" width="3.9" height="16" fill="#b8b8b8"/></svg>
<svg style="position:absolute;left:1120px;top:1021px;" width="11" height="16" viewBox="0 0 11 16"><path d="M0 0.8 L11 0.8 M0 15.2 L11 15.2" stroke="#b8b8b8" stroke-width="1.5"/><rect x="2.8" y="0" width="3.9" height="16" fill="#b8b8b8"/></svg>
<div style="left:1124.6px;top:900px;width:1.5px;height:331px;background:#2d8ceb;"></div>
<svg style="position:absolute;left:1116px;top:891px;" width="18" height="19" viewBox="0 0 18 19"><path d="M0 0 L17 0 L17 7 L8.5 18.5 L0 7 Z" fill="#2d8ceb"/><path d="M6.5 8 L10.5 8" stroke="#0c3a70" stroke-width="1"/></svg>
<div style="left:2020px;top:820px;width:25px;height:411px;background:#272727;"></div>
<div style="left:2020px;top:967px;width:25px;height:263px;background:#222222;"></div>
<div style="left:2020px;top:941px;width:25px;height:1px;background:#1e1e1e;"></div>
<div style="left:2045px;top:820px;width:3px;height:411px;background:#2a2a2a;"></div>
<svg style="position:absolute;left:2026px;top:916px;" width="16" height="21" viewBox="0 0 16 21"><path d="M0 0 L16 0 L16 14 L8 21 L0 14 Z" fill="#a8a8a8"/></svg>
<svg style="position:absolute;left:2020px;top:945px;" width="23" height="21" viewBox="0 0 23 21"><path d="M2 16 L12 3 L12 16 Z" fill="none" stroke="#b4b4b4" stroke-width="1.5"/><rect x="13" y="6" width="9" height="9" fill="#b4b4b4"/><circle cx="9.5" cy="16" r="4" fill="#272727" stroke="#b4b4b4" stroke-width="1.6"/></svg>
<div style="left:2px;top:1232px;width:2043px;height:26px;background:#252525;"></div>
<div style="left:1272px;top:1230px;width:773px;height:26px;background:#1f1f1f;"></div>
<div style="left:2px;top:1230.5px;width:1270px;height:1.5px;background:#050505;"></div>
<svg style="position:absolute;left:1122px;top:1239px;" width="15" height="7" viewBox="0 0 15 7"><path d="M0 6.5 L4 2.5 L6 4 L9 0.5 L14 6.5 Z" fill="#b0b0b0"/></svg>
<div style="left:1167px;top:1241.5px;width:56px;height:3.5px;background:#424242;border-radius:2px;"></div>
<svg style="position:absolute;left:1152px;top:1237px;" width="16" height="16" viewBox="0 0 16 16"><circle cx="8" cy="8" r="6" fill="#272727" stroke="#9a9a9a" stroke-width="2.6"/></svg>
<svg style="position:absolute;left:1240px;top:1238px;" width="26" height="11" viewBox="0 0 26 11"><path d="M0 10 L6 3 L9 3 L3 10 Z M7 10 L15.5 0.5 L25 10 Z" fill="#b0b0b0"/></svg>
<div style="left:1272px;top:1230px;width:773px;height:25px;background:#202020;"></div>
<div style="left:2020.5px;top:1230px;width:1.5px;height:26px;background:#1a1a1a;"></div>
<div style="left:2022px;top:1230px;width:24px;height:26px;background:#272727;border-radius:0 0 10px 0;"></div>
<div style="left:9px;top:1234px;width:24px;height:21px;background:#1e1e1e;border:1px solid #2e2e2e;box-sizing:border-box;"></div>
<svg style="position:absolute;left:13px;top:1236px;" width="17" height="17" viewBox="0 0 17 17"><rect x="1" y="1" width="10" height="10" fill="none" stroke="#2d8ceb" stroke-width="1.5"/><rect x="4" y="4" width="10" height="10" fill="#1e1e1e" stroke="#2d8ceb" stroke-width="1.5"/><rect x="6.5" y="6.5" width="10" height="10" fill="#1e1e1e" stroke="#2d8ceb" stroke-width="1.5"/><rect x="10" y="10" width="3" height="3" fill="#2d8ceb"/></svg>
<div style="left:37px;top:1234px;width:25px;height:21px;background:#1e1e1e;border:1px solid #2e2e2e;box-sizing:border-box;"></div>
<svg style="position:absolute;left:41px;top:1236px;" width="17" height="17" viewBox="0 0 17 17"><circle cx="6.5" cy="6.5" r="5.5" fill="none" stroke="#2d8ceb" stroke-width="1.5"/><rect x="6.5" y="6.5" width="9.5" height="9.5" fill="none" stroke="#2d8ceb" stroke-width="1.5"/><path d="M6.5 12 A5.5 5.5 0 0 0 12 6.5 L6.5 6.5 Z" fill="#2d8ceb"/></svg>
<svg style="position:absolute;left:68px;top:1234px;" width="20" height="19" viewBox="0 0 20 19"><rect x="6.5" y="1" width="6.5" height="16" fill="#454545"/><path d="M5 1 L6.5 1 L6.5 6.5 L3 9 L6.5 11.5 L6.5 17 L5 17 L5 12.5 L1 9 L5 5.5 Z" fill="#bdbdbd"/><path d="M13 1 L14.5 1 L14.5 5.5 L18.5 9 L14.5 12.5 L14.5 17 L13 17 L13 11.5 L16.5 9 L13 6.5 Z" fill="#bdbdbd"/></svg>
<svg style="position:absolute;left:95px;top:1234px;" width="22" height="18" viewBox="0 0 22 18"><circle cx="7.5" cy="9" r="5.8" fill="#b0b0b0"/><path d="M1 14 L13 14 L17 15 L17 16.5 L1 16.5 Z" fill="#b0b0b0"/><path d="M12.5 13.5 L14.5 5.5 M14 13.5 L18 6.5" stroke="#b0b0b0" stroke-width="1"/><circle cx="14.6" cy="5" r="1.6" fill="#b0b0b0"/><circle cx="18.3" cy="6" r="1.6" fill="#b0b0b0"/></svg>
<div class="t" style="left:156.3px;top:1235.06px;font-size:16px;line-height:20px;color:#a8a8a8;font-weight:400;">Frame Render Time</div>
<div class="t" style="left:304.7px;top:1235.06px;font-size:16px;line-height:20px;color:#c3cc8a;font-weight:700;">93ms</div>
</body></html>
